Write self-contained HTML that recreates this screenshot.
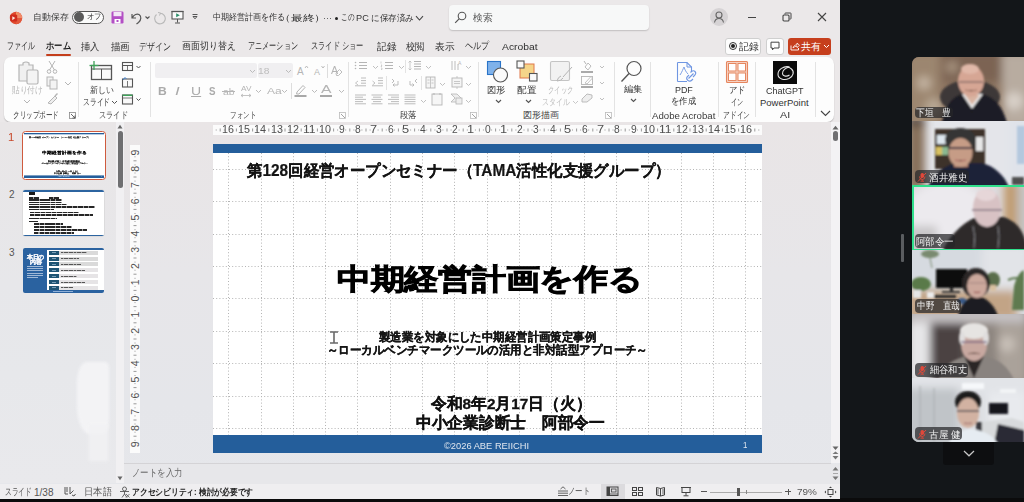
<!DOCTYPE html><html><head><meta charset="utf-8"><style>
*{margin:0;padding:0;box-sizing:border-box}
html,body{width:1024px;height:502px;overflow:hidden;background:#131619;font-family:"Liberation Sans",sans-serif}
.a{position:absolute}
.t{position:absolute;white-space:nowrap;line-height:1}

</style></head><body>
<div class="a" style="left:0;top:0;width:840px;height:498px;background:#ebe8e9"></div>
<div class="a" style="left:0;top:498px;width:1024px;height:4px;background:#0b0b0c"></div>
<svg class="a" style="left:9px;top:10.5px" width="14" height="14" viewBox="0 0 14 14">
<circle cx="7" cy="7" r="6.2" fill="#e04a2e"/><path d="M7 0.8 A6.2 6.2 0 0 1 13.2 7 L7 7Z" fill="#f08a68"/>
<path d="M7 7 L13.2 7 A6.2 6.2 0 0 1 7 13.2Z" fill="#e2583c"/><line x1="7.6" y1="2.6" x2="7.6" y2="5" stroke="#e8d860" stroke-width="0.8"/>
<rect x="1.2" y="3.6" width="7" height="6.8" rx="1" fill="#cf2c1c"/><path d="M3.3 5.2 L6.3 7 L3.3 9.2Z" fill="#fbe6dc"/></svg>
<div class="a" style="left:72px;top:11px;width:32px;height:12.5px;border:1px solid #555;border-radius:6.5px;background:#fbfbfb"></div>
<div class="a" style="left:73.8px;top:12.2px;width:10px;height:10px;border-radius:50%;background:#5a5a5a"></div>
<svg class="a" style="left:111px;top:11px" width="13" height="13" viewBox="0 0 13 13">
<rect x="0.5" y="0.5" width="12" height="12" rx="1.2" fill="#b34fc5"/><rect x="2.5" y="1" width="8" height="4.2" fill="#f3e6f6"/>
<rect x="3.5" y="8" width="6" height="4.5" fill="#fff"/><rect x="5.5" y="9" width="2" height="2" fill="#b34fc5"/></svg>
<svg class="a" style="left:129px;top:10px" width="40" height="15" viewBox="0 0 40 15">
<path d="M3 4 L3 8 L7 8 M3.5 7.5 C5 4.5 8 3.5 10 4.5 C12.5 6 12.5 10 9.5 12.5 L7.5 14" fill="none" stroke="#555" stroke-width="1.2"/>
<path d="M16.5 6.5 L18.5 8.5 L20.5 6.5" fill="none" stroke="#555" stroke-width="1.1"/>
<path d="M31 3.2 A5.3 5.3 0 1 1 27.5 4.5" fill="none" stroke="#b8b8b8" stroke-width="1.1"/><path d="M29 2.5 L31.5 3 L30.5 5.5" fill="none" stroke="#b8b8b8" stroke-width="1"/></svg>
<svg class="a" style="left:171px;top:10px" width="30" height="15" viewBox="0 0 30 15">
<rect x="1" y="1.5" width="11" height="7.5" fill="#fafafa" stroke="#555" stroke-width="1.1"/><line x1="0.5" y1="1.5" x2="12.5" y2="1.5" stroke="#555" stroke-width="1.2"/>
<path d="M5.2 3.2 L8.8 5.2 L5.2 7.2Z" fill="#2c8f6a"/><line x1="6.5" y1="9" x2="6.5" y2="12.5" stroke="#555" stroke-width="1"/><line x1="4" y1="13" x2="9" y2="13" stroke="#555" stroke-width="1"/>
<line x1="21.5" y1="4.5" x2="26.5" y2="4.5" stroke="#555" stroke-width="1"/><path d="M22 6.5 L24 8.8 L26 6.5Z" fill="none" stroke="#555" stroke-width="1"/></svg>
<div class="a" style="left:323.5px;top:18px;width:1.2px;height:1.2px;background:#666"></div><div class="a" style="left:326.5px;top:18px;width:1.2px;height:1.2px;background:#666"></div><div class="a" style="left:329.5px;top:18px;width:1.2px;height:1.2px;background:#666"></div>
<div class="a" style="left:334.5px;top:17px;width:3px;height:3px;border-radius:50%;background:#222"></div>
<svg class="a" style="left:414.5px;top:15px" width="9" height="7" viewBox="0 0 9 7"><path d="M1 1.2 L4.5 5 L8 1.2" fill="none" stroke="#444" stroke-width="1.1"/></svg>
<div class="a" style="left:449px;top:5px;width:200px;height:25px;background:#f7f8f8;border-radius:4px;box-shadow:0 1px 1.5px rgba(0,0,0,.18)"></div>
<svg class="a" style="left:454px;top:11px" width="13" height="13" viewBox="0 0 13 13"><circle cx="8" cy="5" r="3.8" fill="none" stroke="#555" stroke-width="1.1"/><line x1="5.3" y1="7.7" x2="1.2" y2="11.8" stroke="#555" stroke-width="1.2"/></svg>
<div class="a" style="left:710px;top:8px;width:18px;height:18px;border-radius:50%;background:#d6d3d5"></div>
<svg class="a" style="left:711px;top:9px" width="16" height="16" viewBox="0 0 16 16"><circle cx="8" cy="6" r="3" fill="none" stroke="#666" stroke-width="1.1"/><path d="M3.5 13.5 C4 10.5 6 9.5 8 9.5 C10 9.5 12 10.5 12.5 13.5" fill="none" stroke="#666" stroke-width="1.1"/></svg>
<div class="a" style="left:748px;top:16.5px;width:8px;height:1.3px;background:#444"></div>
<svg class="a" style="left:782px;top:12px" width="10" height="10" viewBox="0 0 10 10"><rect x="1" y="3" width="6" height="6" rx="1" fill="none" stroke="#444" stroke-width="1.1"/><path d="M3 2.5 L3 1.5 Q3 1 3.5 1 L8.5 1 Q9 1 9 1.5 L9 6.5 Q9 7 8.5 7 L7.5 7" fill="none" stroke="#444" stroke-width="1"/></svg>
<svg class="a" style="left:817px;top:12px" width="10" height="10" viewBox="0 0 10 10"><path d="M1 1 L9 9 M9 1 L1 9" stroke="#444" stroke-width="1.1"/></svg>
<div class="a" style="left:46px;top:53.5px;width:25px;height:2px;background:#c43e1c;border-radius:1px"></div>
<div class="a" style="left:725px;top:37.5px;width:36px;height:17px;background:#fdfdfd;border:1px solid #cfcfcf;border-radius:3px"></div>
<div class="a" style="left:728.5px;top:42px;width:8px;height:8px;border-radius:50%;border:1px solid #333"></div><div class="a" style="left:730.5px;top:44px;width:4px;height:4px;border-radius:50%;background:#222"></div>
<div class="a" style="left:766px;top:37.5px;width:18px;height:17px;background:#fdfdfd;border:1px solid #cfcfcf;border-radius:3px"></div>
<svg class="a" style="left:770px;top:41px" width="10" height="10" viewBox="0 0 10 10"><path d="M1 1.2 L9 1.2 L9 7 L4 7 L2.5 8.8 L2.5 7 L1 7Z" fill="none" stroke="#444" stroke-width="1"/></svg>
<div class="a" style="left:787.5px;top:37.5px;width:43px;height:17px;background:#c63f1d;border-radius:3px"></div>
<svg class="a" style="left:789.5px;top:41px" width="10" height="10" viewBox="0 0 10 10"><path d="M1 4.5 L1 9 L8.5 9 L8.5 7" fill="none" stroke="#fff" stroke-width="0.9"/><path d="M3 7 C3.3 5 5 3.8 7 3.8 L7 2 L9.5 4.3 L7 6.6 L7 5.2 C5.5 5.2 4.2 5.8 3 7Z" fill="none" stroke="#fff" stroke-width="0.8"/></svg>
<svg class="a" style="left:823px;top:44px" width="7" height="5" viewBox="0 0 7 5"><path d="M1 1 L3.5 3.5 L6 1" fill="none" stroke="#fff" stroke-width="1"/></svg>
<div class="a" style="left:4px;top:57px;width:830px;height:65px;background:#fdfdfd;border-radius:7px;box-shadow:0 1px 1.2px rgba(0,0,0,.22)"></div>
<div class="a" style="left:78px;top:62px;width:1px;height:55px;background:#e3e3e3"></div>
<div class="a" style="left:150px;top:62px;width:1px;height:55px;background:#e3e3e3"></div>
<div class="a" style="left:348px;top:62px;width:1px;height:55px;background:#e3e3e3"></div>
<div class="a" style="left:478px;top:62px;width:1px;height:55px;background:#e3e3e3"></div>
<div class="a" style="left:614px;top:62px;width:1px;height:55px;background:#e3e3e3"></div>
<div class="a" style="left:650px;top:62px;width:1px;height:55px;background:#e3e3e3"></div>
<div class="a" style="left:718px;top:62px;width:1px;height:55px;background:#e3e3e3"></div>
<div class="a" style="left:755px;top:62px;width:1px;height:55px;background:#e3e3e3"></div>
<div class="a" style="left:815px;top:62px;width:1px;height:55px;background:#e3e3e3"></div>
<svg class="a" style="left:16px;top:60px" width="26" height="26" viewBox="0 0 26 26">
<path d="M3 5 L7 5 L7 3 Q10 1 13 3 L13 5 L17 5 L17 21 L3 21Z" fill="#f0f0f0" stroke="#b5b5b5" stroke-width="1.2"/>
<rect x="11" y="10" width="11" height="14" rx="1.5" fill="#f4f4f4" stroke="#b5b5b5" stroke-width="1.2"/></svg>
<svg class="a" style="left:23px;top:99px" width="8" height="5" viewBox="0 0 8 5"><path d="M1 1 L4 4 L7 1" fill="none" stroke="#b5b5b5" stroke-width="1"/></svg>
<svg class="a" style="left:45px;top:60px" width="14" height="46" viewBox="0 0 14 46">
<path d="M4 1 L9.5 10 M10 1 L4.5 10" stroke="#b5b5b5" stroke-width="1"/><circle cx="4" cy="11.5" r="1.8" fill="none" stroke="#b5b5b5"/><circle cx="10" cy="11.5" r="1.8" fill="none" stroke="#b5b5b5"/>
<rect x="2" y="17" width="6" height="9" fill="#f3f3f3" stroke="#b5b5b5"/><rect x="5" y="20" width="7" height="9" fill="#f3f3f3" stroke="#b5b5b5"/>
<path d="M3 43 L10 36 L12 38 L6 44Z" fill="#eee" stroke="#b5b5b5"/><path d="M10 36 L12.5 33.5" stroke="#b5b5b5" stroke-width="1.5"/></svg>
<svg class="a" style="left:64px;top:81px" width="8" height="5" viewBox="0 0 8 5"><path d="M1 1 L4 4 L7 1" fill="none" stroke="#b5b5b5" stroke-width="1"/></svg>
<svg class="a" style="left:69px;top:112px" width="7" height="7" viewBox="0 0 7 7"><rect x="0.5" y="0.5" width="6" height="6" fill="none" stroke="#888" stroke-width="0.8"/><path d="M2 2 L6 6 M6 3.5 L6 6 L3.5 6" stroke="#555" stroke-width="0.9" fill="none"/></svg>
<svg class="a" style="left:88px;top:60px" width="26" height="22" viewBox="0 0 26 22">
<rect x="3.5" y="5.5" width="20" height="14" fill="#fafafa" stroke="#555" stroke-width="1.3"/><line x1="3.5" y1="9" x2="23.5" y2="9" stroke="#555" stroke-width="1"/><line x1="13.5" y1="9" x2="13.5" y2="19" stroke="#555" stroke-width="1"/>
<line x1="6" y1="1" x2="6" y2="10" stroke="#3fa35a" stroke-width="1.3"/><line x1="1.5" y1="5.5" x2="10.5" y2="5.5" stroke="#3fa35a" stroke-width="1.3"/></svg>
<svg class="a" style="left:111px;top:100px" width="7" height="5" viewBox="0 0 7 5"><path d="M1 1 L3.5 3.5 L6 1" fill="none" stroke="#555" stroke-width="1"/></svg>
<svg class="a" style="left:121px;top:61px" width="24" height="45" viewBox="0 0 24 45">
<rect x="1.5" y="1.5" width="10" height="8" fill="#fafafa" stroke="#555" stroke-width="1.1"/><line x1="1.5" y1="4.5" x2="11.5" y2="4.5" stroke="#555"/><line x1="6.5" y1="4.5" x2="6.5" y2="9.5" stroke="#555" stroke-width="0.8"/>
<path d="M15.5 5 L17.5 7 L19.5 5" fill="none" stroke="#555" stroke-width="1"/>
<rect x="1.5" y="18" width="10" height="8" fill="#fafafa" stroke="#555" stroke-width="1.1"/><line x1="6.5" y1="20" x2="6.5" y2="26" stroke="#555" stroke-width="0.8"/><path d="M2 19 L4 16.5 L5.5 18" fill="none" stroke="#3c7fd0" stroke-width="1"/>
<rect x="1.5" y="34" width="10" height="9" fill="#fafafa" stroke="#555" stroke-width="1.1"/><line x1="1.5" y1="34.3" x2="11.5" y2="34.3" stroke="#3fa35a" stroke-width="1.4"/><line x1="1.5" y1="37" x2="11.5" y2="37" stroke="#555" stroke-width="0.8"/>
<path d="M15.5 37.5 L17.5 39.5 L19.5 37.5" fill="none" stroke="#555" stroke-width="1"/></svg>
<div class="a" style="left:155px;top:63px;width:102px;height:15px;background:#f0eff1;border-radius:2px"></div>
<div class="a" style="left:258px;top:63px;width:35px;height:15px;background:#f0eff1;border-radius:2px"></div>
<svg class="a" style="left:249px;top:69px" width="7" height="5" viewBox="0 0 7 5"><path d="M1 1 L3.5 3.5 L6 1" fill="none" stroke="#bbb" stroke-width="1"/></svg>
<svg class="a" style="left:285px;top:69px" width="7" height="5" viewBox="0 0 7 5"><path d="M1 1 L3.5 3.5 L6 1" fill="none" stroke="#bbb" stroke-width="1"/></svg>
<svg class="a" style="left:304px;top:64px" width="22" height="6" viewBox="0 0 22 6"><path d="M1 4 L2.5 2 L4 4" fill="none" stroke="#b5b5b5" stroke-width="0.9"/><path d="M17.5 2 L19 4 L20.5 2" fill="none" stroke="#b5b5b5" stroke-width="0.9"/></svg>
<div class="a" style="left:327px;top:64px;width:1px;height:14px;background:#ddd"></div>
<svg class="a" style="left:335px;top:68px" width="8" height="8" viewBox="0 0 8 8"><path d="M1 5 L4.5 1.5 L7 4 L3.5 7.5 L1.5 7.5Z" fill="none" stroke="#b5b5b5" stroke-width="0.9"/></svg>
<div class="a" style="left:222px;top:91px;width:13px;height:1px;background:#b5b5b5"></div>
<svg class="a" style="left:240px;top:93px" width="12" height="5" viewBox="0 0 12 5"><path d="M1 2.5 L11 2.5 M3 1 L1 2.5 L3 4 M9 1 L11 2.5 L9 4" fill="none" stroke="#b5b5b5" stroke-width="0.8"/></svg>
<svg class="a" style="left:255px;top:89px" width="7" height="5" viewBox="0 0 7 5"><path d="M1 1 L3.5 3.5 L6 1" fill="none" stroke="#bbb" stroke-width="1"/></svg>
<svg class="a" style="left:281px;top:89px" width="7" height="5" viewBox="0 0 7 5"><path d="M1 1 L3.5 3.5 L6 1" fill="none" stroke="#bbb" stroke-width="1"/></svg>
<svg class="a" style="left:311px;top:89px" width="7" height="5" viewBox="0 0 7 5"><path d="M1 1 L3.5 3.5 L6 1" fill="none" stroke="#bbb" stroke-width="1"/></svg>
<svg class="a" style="left:338px;top:89px" width="7" height="5" viewBox="0 0 7 5"><path d="M1 1 L3.5 3.5 L6 1" fill="none" stroke="#bbb" stroke-width="1"/></svg>
<div class="a" style="left:291px;top:83px;width:1px;height:16px;background:#ddd"></div>
<svg class="a" style="left:294px;top:83px" width="13" height="14" viewBox="0 0 13 14"><path d="M3 9 L9 2.5 L11 4.5 L5 11 L2.5 11Z" fill="none" stroke="#b5b5b5" stroke-width="1"/><rect x="0.5" y="12" width="12" height="2" fill="#a8a8a8"/></svg>
<div class="a" style="left:320px;top:95px;width:12px;height:2px;background:#a8a8a8"></div>
<svg class="a" style="left:339px;top:112px" width="7" height="7" viewBox="0 0 7 7"><rect x="0.5" y="0.5" width="6" height="6" fill="none" stroke="#bbb" stroke-width="0.8"/><path d="M2 2 L6 6" stroke="#999" stroke-width="0.9"/></svg>
<svg class="a" style="left:350px;top:60px" width="125" height="48" viewBox="0 0 125 48"><line x1="9" y1="2.5" x2="17" y2="2.5" stroke="#b5b5b5" stroke-width="1"/><line x1="9" y1="5.5" x2="17" y2="5.5" stroke="#b5b5b5" stroke-width="1"/><line x1="9" y1="8.5" x2="17" y2="8.5" stroke="#b5b5b5" stroke-width="1"/><circle cx="5.5" cy="2.5" r="0.8" fill="#b5b5b5"/><circle cx="5.5" cy="5.5" r="0.8" fill="#b5b5b5"/><circle cx="5.5" cy="8.5" r="0.8" fill="#b5b5b5"/><line x1="35" y1="2.5" x2="43" y2="2.5" stroke="#b5b5b5" stroke-width="1"/><line x1="35" y1="5.5" x2="43" y2="5.5" stroke="#b5b5b5" stroke-width="1"/><line x1="35" y1="8.5" x2="43" y2="8.5" stroke="#b5b5b5" stroke-width="1"/><path d="M31 1.5 L31 3.5 M31 5 L32 5 L31 6.5 L32 6.5 M31 8 L32 8 L32 9.5 L31 9.5" stroke="#b5b5b5" stroke-width="0.6" fill="none"/><line x1="64" y1="1.5" x2="71" y2="1.5" stroke="#b5b5b5" stroke-width="1"/><line x1="64" y1="4.0" x2="71" y2="4.0" stroke="#b5b5b5" stroke-width="1"/><line x1="64" y1="6.5" x2="71" y2="6.5" stroke="#b5b5b5" stroke-width="1"/><line x1="64" y1="9.0" x2="71" y2="9.0" stroke="#b5b5b5" stroke-width="1"/><path d="M60 1 L60 10 M58.5 2.5 L60 1 L61.5 2.5 M58.5 8.5 L60 10 L61.5 8.5" stroke="#b5b5b5" stroke-width="0.7" fill="none"/><path d="M102 1 L102 10 M105 1 L105 10 M108 4 L108 10" stroke="#b5b5b5" stroke-width="0.9"/><text x="108" y="5" font-size="5" fill="#b5b5b5">A</text><line x1="11" y1="18.0" x2="16" y2="18.0" stroke="#b5b5b5" stroke-width="0.9"/><line x1="11" y1="20.6" x2="16" y2="20.6" stroke="#b5b5b5" stroke-width="0.9"/><line x1="11" y1="23.2" x2="16" y2="23.2" stroke="#b5b5b5" stroke-width="0.9"/><line x1="5" y1="25.8" x2="16" y2="25.8" stroke="#b5b5b5" stroke-width="0.9"/><path d="M8 21 L5.5 23 L8 25" fill="none" stroke="#b5b5b5" stroke-width="0.8"/><line x1="28" y1="18.0" x2="33" y2="18.0" stroke="#b5b5b5" stroke-width="0.9"/><line x1="28" y1="20.6" x2="33" y2="20.6" stroke="#b5b5b5" stroke-width="0.9"/><line x1="28" y1="23.2" x2="33" y2="23.2" stroke="#b5b5b5" stroke-width="0.9"/><line x1="22" y1="25.8" x2="33" y2="25.8" stroke="#b5b5b5" stroke-width="0.9"/><path d="M22.5 21 L25 23 L22.5 25" fill="none" stroke="#b5b5b5" stroke-width="0.8"/><path d="M42 19 L44 21 L42 23 M48 21 L48 25 L43 25 M44.5 23.5 L43 25 L44.5 26.5" fill="none" stroke="#b5b5b5" stroke-width="0.9"/><path d="M60 21 L60 25 L64 25 M62.5 23.5 L64 25 L62.5 26.5 M67 19 L65 21 L67 23" fill="none" stroke="#b5b5b5" stroke-width="0.9"/><rect x="76" y="17" width="9" height="11" fill="#f5f5f5" stroke="#b5b5b5" stroke-width="0.9"/><path d="M80.5 17 L80.5 28 M77.5 20 L79.5 20 M81.5 20 L83.5 20 M77.5 23 L79.5 23 M81.5 23 L83.5 23" stroke="#b5b5b5" stroke-width="0.7"/><rect x="102" y="18" width="10" height="9" fill="#f5f5f5" stroke="#b5b5b5" stroke-width="0.9"/><path d="M104 21.5 L110 21.5 M104 23.5 L110 23.5 M107 16 L107 18 M107 27 L107 29" stroke="#b5b5b5" stroke-width="0.7"/><line x1="5.0" y1="35.0" x2="16.0" y2="35.0" stroke="#b5b5b5" stroke-width="0.9"/><line x1="5.0" y1="37.2" x2="13.0" y2="37.2" stroke="#b5b5b5" stroke-width="0.9"/><line x1="5.0" y1="39.4" x2="16.0" y2="39.4" stroke="#b5b5b5" stroke-width="0.9"/><line x1="5.0" y1="41.6" x2="13.0" y2="41.6" stroke="#b5b5b5" stroke-width="0.9"/><line x1="5.0" y1="43.8" x2="16.0" y2="43.8" stroke="#b5b5b5" stroke-width="0.9"/><line x1="21.5" y1="35.0" x2="32.5" y2="35.0" stroke="#b5b5b5" stroke-width="0.9"/><line x1="23.0" y1="37.2" x2="31.0" y2="37.2" stroke="#b5b5b5" stroke-width="0.9"/><line x1="21.5" y1="39.4" x2="32.5" y2="39.4" stroke="#b5b5b5" stroke-width="0.9"/><line x1="23.0" y1="41.6" x2="31.0" y2="41.6" stroke="#b5b5b5" stroke-width="0.9"/><line x1="21.5" y1="43.8" x2="32.5" y2="43.8" stroke="#b5b5b5" stroke-width="0.9"/><line x1="38.0" y1="35.0" x2="49.0" y2="35.0" stroke="#b5b5b5" stroke-width="0.9"/><line x1="41.0" y1="37.2" x2="49.0" y2="37.2" stroke="#b5b5b5" stroke-width="0.9"/><line x1="38.0" y1="39.4" x2="49.0" y2="39.4" stroke="#b5b5b5" stroke-width="0.9"/><line x1="41.0" y1="41.6" x2="49.0" y2="41.6" stroke="#b5b5b5" stroke-width="0.9"/><line x1="38.0" y1="43.8" x2="49.0" y2="43.8" stroke="#b5b5b5" stroke-width="0.9"/><line x1="54.5" y1="35.0" x2="65.5" y2="35.0" stroke="#b5b5b5" stroke-width="0.9"/><line x1="54.5" y1="37.2" x2="65.5" y2="37.2" stroke="#b5b5b5" stroke-width="0.9"/><line x1="54.5" y1="39.4" x2="65.5" y2="39.4" stroke="#b5b5b5" stroke-width="0.9"/><line x1="54.5" y1="41.6" x2="65.5" y2="41.6" stroke="#b5b5b5" stroke-width="0.9"/><line x1="54.5" y1="43.8" x2="65.5" y2="43.8" stroke="#b5b5b5" stroke-width="0.9"/><rect x="82" y="34" width="10" height="11" fill="#f6f6f6" stroke="#b5b5b5" stroke-width="0.9"/><path d="M84 33 L84 35 M90 33 L90 35" stroke="#b5b5b5"/><path d="M101 34 L107 34 L111 38 L107 42 L101 42 L105 38Z" fill="#eee" stroke="#b5b5b5" stroke-width="0.8"/><rect x="106" y="38" width="6" height="6" fill="#eee" stroke="#b5b5b5" stroke-width="0.8"/></svg>
<svg class="a" style="left:372px;top:65px" width="7" height="5" viewBox="0 0 7 5"><path d="M1 1 L3.5 3.5 L6 1" fill="none" stroke="#c0c0c0" stroke-width="1"/></svg>
<svg class="a" style="left:398px;top:65px" width="7" height="5" viewBox="0 0 7 5"><path d="M1 1 L3.5 3.5 L6 1" fill="none" stroke="#c0c0c0" stroke-width="1"/></svg>
<svg class="a" style="left:425px;top:65px" width="7" height="5" viewBox="0 0 7 5"><path d="M1 1 L3.5 3.5 L6 1" fill="none" stroke="#c0c0c0" stroke-width="1"/></svg>
<svg class="a" style="left:465px;top:65px" width="7" height="5" viewBox="0 0 7 5"><path d="M1 1 L3.5 3.5 L6 1" fill="none" stroke="#c0c0c0" stroke-width="1"/></svg>
<svg class="a" style="left:439px;top:82px" width="7" height="5" viewBox="0 0 7 5"><path d="M1 1 L3.5 3.5 L6 1" fill="none" stroke="#c0c0c0" stroke-width="1"/></svg>
<svg class="a" style="left:465px;top:82px" width="7" height="5" viewBox="0 0 7 5"><path d="M1 1 L3.5 3.5 L6 1" fill="none" stroke="#c0c0c0" stroke-width="1"/></svg>
<svg class="a" style="left:420px;top:99px" width="7" height="5" viewBox="0 0 7 5"><path d="M1 1 L3.5 3.5 L6 1" fill="none" stroke="#c0c0c0" stroke-width="1"/></svg>
<svg class="a" style="left:465px;top:99px" width="7" height="5" viewBox="0 0 7 5"><path d="M1 1 L3.5 3.5 L6 1" fill="none" stroke="#c0c0c0" stroke-width="1"/></svg>
<div class="a" style="left:405px;top:60px;width:1px;height:13px;background:#e3e3e3"></div>
<div class="a" style="left:386px;top:76px;width:1px;height:14px;background:#e3e3e3"></div>
<div class="a" style="left:421px;top:76px;width:1px;height:14px;background:#e3e3e3"></div>
<svg class="a" style="left:470px;top:112px" width="7" height="7" viewBox="0 0 7 7"><rect x="0.5" y="0.5" width="6" height="6" fill="none" stroke="#bbb" stroke-width="0.8"/><path d="M2 2 L6 6" stroke="#999" stroke-width="0.9"/></svg>
<svg class="a" style="left:486px;top:60px" width="22" height="23" viewBox="0 0 22 23">
<rect x="1.5" y="1.5" width="13" height="13" fill="#7fb2ea" stroke="#2a74c8" stroke-width="1.1"/><circle cx="14.5" cy="15" r="7" fill="#fafafa" stroke="#555" stroke-width="1.1"/></svg>
<svg class="a" style="left:495px;top:99px" width="7" height="5" viewBox="0 0 7 5"><path d="M1 1 L3.5 3.5 L6 1" fill="none" stroke="#555" stroke-width="1.1"/></svg>
<svg class="a" style="left:516px;top:60px" width="23" height="23" viewBox="0 0 23 23">
<rect x="4" y="4" width="14" height="14" fill="#f5d589" stroke="#e0784a" stroke-width="1"/><rect x="1" y="1" width="7" height="7" fill="#fafafa" stroke="#555" stroke-width="1.1"/><rect x="13.5" y="13.5" width="7.5" height="7.5" fill="#fafafa" stroke="#555" stroke-width="1.1"/></svg>
<svg class="a" style="left:525px;top:99px" width="7" height="5" viewBox="0 0 7 5"><path d="M1 1 L3.5 3.5 L6 1" fill="none" stroke="#555" stroke-width="1.1"/></svg>
<svg class="a" style="left:549px;top:60px" width="25" height="23" viewBox="0 0 25 23">
<rect x="1.5" y="1.5" width="19" height="19" rx="1.5" fill="#f2f2f2" stroke="#c4c4c4" stroke-width="1.1"/><path d="M23 7 L14 17 M12 16 Q9 17 8 21 Q12 21 14 18" fill="#f2f2f2" stroke="#b5b5b5" stroke-width="1"/></svg>
<svg class="a" style="left:572px;top:100px" width="7" height="5" viewBox="0 0 7 5"><path d="M1 1 L3.5 3.5 L6 1" fill="none" stroke="#c8c8c8" stroke-width="1"/></svg>
<svg class="a" style="left:580px;top:60px" width="28" height="46" viewBox="0 0 28 46">
<path d="M5 7 L8 3 L11 6 L8 10Z" fill="none" stroke="#b5b5b5" stroke-width="0.9"/><path d="M4 1 L6 4" stroke="#b5b5b5"/><rect x="1" y="11" width="12" height="2" fill="#aaa"/>
<rect x="1.5" y="16.5" width="11" height="8" fill="none" stroke="#b5b5b5" stroke-width="0.9"/><path d="M5 23 L11 16.5 L12.5 18 L7 24Z" fill="#fff" stroke="#b5b5b5" stroke-width="0.8"/><rect x="1" y="26" width="12" height="2" fill="#aaa"/>
<path d="M2 39 L7 34 L12 35 L12 38 L7 42 L2 42Z" fill="#eee" stroke="#b5b5b5" stroke-width="0.9"/>
<path d="M20 6 L22 8 L24 6 M20 22 L22 24 L24 22 M20 38 L22 40 L24 38" fill="none" stroke="#c0c0c0" stroke-width="1"/></svg>
<svg class="a" style="left:605px;top:112px" width="7" height="7" viewBox="0 0 7 7"><rect x="0.5" y="0.5" width="6" height="6" fill="none" stroke="#bbb" stroke-width="0.8"/><path d="M2 2 L6 6" stroke="#999" stroke-width="0.9"/></svg>
<svg class="a" style="left:620px;top:60px" width="24" height="23" viewBox="0 0 24 23"><circle cx="14" cy="8.5" r="7" fill="none" stroke="#555" stroke-width="1.2"/><line x1="9" y1="13.5" x2="1.5" y2="21.5" stroke="#555" stroke-width="1.3"/></svg>
<svg class="a" style="left:630px;top:98px" width="7" height="5" viewBox="0 0 7 5"><path d="M1 1 L3.5 3.5 L6 1" fill="none" stroke="#555" stroke-width="1.1"/></svg>
<svg class="a" style="left:675px;top:61px" width="23" height="23" viewBox="0 0 23 23">
<path d="M2.5 1.5 L12 1.5 L16.5 6 L16.5 11 M12 20.5 L2.5 20.5 Z M2.5 1.5 L2.5 20.5" fill="none" stroke="#6f96e2" stroke-width="1.1"/><path d="M12 1.5 L12 6 L16.5 6" fill="none" stroke="#6f96e2" stroke-width="1"/>
<path d="M5 14 C7 11 8 8 9 6 C10 9 11 11 13 13" fill="none" stroke="#6f96e2" stroke-width="0.9"/>
<path d="M13.5 17.5 L18.5 12.5 M14 14 L12 16 Q11 18 13 19.5 Q15 21 17 19 L18 18 M18 16 L20 14 Q21.5 12 20 10.5 Q18.5 9 16.5 10.5 L15.5 11.5" fill="none" stroke="#6f96e2" stroke-width="1.1"/></svg>
<svg class="a" style="left:725px;top:60px" width="24" height="24" viewBox="0 0 24 24">
<rect x="1.5" y="1.5" width="21" height="21" rx="1" fill="#f6d2c4" stroke="#e6875f" stroke-width="1.1"/>
<rect x="3.5" y="3.5" width="7.5" height="7.5" fill="#fff" stroke="#e6875f" stroke-width="1"/><rect x="13" y="3.5" width="7.5" height="7.5" fill="#fff" stroke="#e6875f" stroke-width="1"/>
<rect x="3.5" y="13" width="7.5" height="7.5" fill="#fff" stroke="#e6875f" stroke-width="1"/><rect x="13" y="13" width="7.5" height="7.5" fill="#fff" stroke="#e6875f" stroke-width="1"/></svg>
<svg class="a" style="left:773px;top:60.5px" width="24" height="23" viewBox="0 0 24 23">
<rect x="0" y="0" width="24" height="23" fill="#0a0a0a"/>
<path d="M16 5.8 C10.5 4.8 5 8.5 5 13.2 C5 17.8 11 19.8 16 17.5 C20.5 15.3 21.5 10.5 18.5 8 C17.5 7 16.5 6.5 15 6.2" fill="none" stroke="#e6e6e6" stroke-width="1.1"/><path d="M17 6 C12.5 6.5 9 9.5 9.5 12.8 C10 15.5 14 15.8 16.5 14" fill="none" stroke="#e6e6e6" stroke-width="1.1"/></svg>
<svg class="a" style="left:820px;top:110px" width="11" height="7" viewBox="0 0 11 7"><path d="M1 1 L5.5 5.5 L10 1" fill="none" stroke="#444" stroke-width="1.1"/></svg>
<div class="a" style="left:0;top:122px;width:840px;height:376px;background:linear-gradient(180deg,#e9e5e6 0%,#e7e6e9 40%,#e5e6ea 75%,#e6e7eb 100%)"></div>
<div class="a" style="left:0;top:122px;width:116px;height:361px;background:linear-gradient(180deg,#e9e6e7 0%,#e7e7ea 45%,#e7e8eb 70%,#e9e9ec 100%)"></div>
<div class="a" style="left:77px;top:362px;width:32px;height:72px;background:#f5f5f7;opacity:.9;filter:blur(1.6px);border-radius:30% 10% 20% 40%"></div><div class="a" style="left:89px;top:425px;width:19px;height:36px;background:#f2f2f4;opacity:.85;filter:blur(1.6px)"></div>
<div class="a" style="left:116px;top:122px;width:8px;height:361px;background:#f1f0f2"></div>
<svg class="a" style="left:117px;top:124px" width="6" height="5" viewBox="0 0 6 5"><path d="M0.5 4.5 L3 0.8 L5.5 4.5Z" fill="#666"/></svg>
<div class="a" style="left:118px;top:131px;width:5px;height:57px;border-radius:2.5px;background:#6f6f71"></div>
<svg class="a" style="left:117px;top:476px" width="6" height="5" viewBox="0 0 6 5"><path d="M0.5 0.5 L3 4.2 L5.5 0.5Z" fill="#666"/></svg>
<div class="a" style="left:22px;top:131px;width:84px;height:49px;border:1.6px solid #cf5b3e;border-radius:3.5px;background:#fff;overflow:hidden"></div>
<div class="a" style="left:23px;top:190px;width:81px;height:46px;background:#fff;border-radius:2px;overflow:hidden;box-shadow:0 0 0 0.5px #d0d0d0"><div class="a" style="left:0;top:0;width:81px;height:1.6px;background:#2c64a0"></div><div class="a" style="left:0;top:44.5px;width:81px;height:2px;background:#2c64a0"></div><div class="a" style="left:5.6px;top:2.4px;width:6.5px;height:2.6px;background:#1a1a1a"></div><div class="a" style="left:5.6px;top:7.2px;width:10.200000000000001px;height:1.6px;background:repeating-linear-gradient(90deg,#262626 0 4.5px,#9a9a9a 4.5px 5.5px)"></div><div class="a" style="left:25.5px;top:7.2px;width:10.200000000000003px;height:1.6px;background:repeating-linear-gradient(90deg,#262626 0 4.5px,#9a9a9a 4.5px 5.5px)"></div><div class="a" style="left:5.6px;top:9.2px;width:33.4px;height:1.6px;background:repeating-linear-gradient(90deg,#262626 0 4.5px,#9a9a9a 4.5px 5.5px)"></div><div class="a" style="left:5.6px;top:11.5px;width:33.9px;height:1.6px;background:repeating-linear-gradient(90deg,#262626 0 4.5px,#9a9a9a 4.5px 5.5px)"></div><div class="a" style="left:5.6px;top:13.7px;width:38.699999999999996px;height:1.6px;background:repeating-linear-gradient(90deg,#262626 0 4.5px,#9a9a9a 4.5px 5.5px)"></div><div class="a" style="left:5.6px;top:16.0px;width:66.7px;height:1.6px;background:repeating-linear-gradient(90deg,#262626 0 4.5px,#9a9a9a 4.5px 5.5px)"></div><div class="a" style="left:5.6px;top:18.9px;width:25.799999999999997px;height:1.6px;background:repeating-linear-gradient(90deg,#262626 0 4.5px,#9a9a9a 4.5px 5.5px)"></div><div class="a" style="left:7.2px;top:21.9px;width:48.8px;height:1.6px;background:repeating-linear-gradient(90deg,#262626 0 4.5px,#9a9a9a 4.5px 5.5px)"></div><div class="a" style="left:7.2px;top:24.4px;width:62.8px;height:1.6px;background:repeating-linear-gradient(90deg,#262626 0 4.5px,#9a9a9a 4.5px 5.5px)"></div><div class="a" style="left:5.6px;top:27.5px;width:28.4px;height:1.6px;background:repeating-linear-gradient(90deg,#262626 0 4.5px,#9a9a9a 4.5px 5.5px)"></div><div class="a" style="left:6px;top:30.7px;width:8.7px;height:1.6px;background:repeating-linear-gradient(90deg,#262626 0 4.5px,#9a9a9a 4.5px 5.5px)"></div><div class="a" style="left:11px;top:33.400000000000006px;width:29px;height:1.6px;background:repeating-linear-gradient(90deg,#262626 0 4.5px,#9a9a9a 4.5px 5.5px)"></div><div class="a" style="left:11px;top:36.2px;width:37.6px;height:1.6px;background:repeating-linear-gradient(90deg,#262626 0 4.5px,#9a9a9a 4.5px 5.5px)"></div><div class="a" style="left:11px;top:39.2px;width:53.2px;height:1.6px;background:repeating-linear-gradient(90deg,#262626 0 4.5px,#9a9a9a 4.5px 5.5px)"></div><div class="a" style="left:11px;top:42.0px;width:39.8px;height:1.6px;background:repeating-linear-gradient(90deg,#262626 0 4.5px,#9a9a9a 4.5px 5.5px)"></div></div>
<div class="a" style="left:23px;top:248px;width:81px;height:45px;background:#2a62a0;border-radius:2px;overflow:hidden"><div class="a" style="left:24.4px;top:1.6px;width:56.6px;height:40.8px;background:#fff"></div><div class="a" style="left:4.3px;top:5.6px;width:34px;font:bold 11px/10.5px 'Liberation Sans',sans-serif;color:#f4f6fa;-webkit-text-stroke:0.7px #f4f6fa;text-align:center;transform:scale(0.5);transform-origin:0 0;white-space:nowrap">本日の<br>内容</div><div class="a" style="left:3.5px;top:18.0px;width:16px;height:0.9px;background:#9fb8d6"></div><div class="a" style="left:3.5px;top:20.2px;width:16px;height:0.9px;background:#9fb8d6"></div><div class="a" style="left:3.5px;top:22.4px;width:16px;height:0.9px;background:#9fb8d6"></div><div class="a" style="left:3.5px;top:24.6px;width:16px;height:0.9px;background:#9fb8d6"></div><div class="a" style="left:3.5px;top:26.8px;width:16px;height:0.9px;background:#9fb8d6"></div><div class="a" style="left:3.5px;top:29.0px;width:11px;height:0.9px;background:#9fb8d6"></div><div class="a" style="left:26.2px;top:2.7px;width:9.5px;height:4px;background:#1e5473"></div><div class="a" style="left:35.7px;top:2.7px;width:39.3px;height:4px;background:#dadada"></div><div class="a" style="left:37.5px;top:4.1px;width:26px;height:1.1px;background:repeating-linear-gradient(90deg,#555 0 2px,#aaa 2px 2.6px)"></div><div class="a" style="left:29px;top:4.2px;width:3.5px;height:1px;background:#7aa0b8"></div><div class="a" style="left:26.2px;top:8.58px;width:9.5px;height:4px;background:#1e5473"></div><div class="a" style="left:35.7px;top:8.58px;width:39.3px;height:4px;background:#dadada"></div><div class="a" style="left:37.5px;top:9.98px;width:18px;height:1.1px;background:repeating-linear-gradient(90deg,#555 0 2px,#aaa 2px 2.6px)"></div><div class="a" style="left:29px;top:10.08px;width:3.5px;height:1px;background:#7aa0b8"></div><div class="a" style="left:26.2px;top:14.46px;width:9.5px;height:4px;background:#1e5473"></div><div class="a" style="left:35.7px;top:14.46px;width:39.3px;height:4px;background:#dadada"></div><div class="a" style="left:37.5px;top:15.860000000000001px;width:20px;height:1.1px;background:repeating-linear-gradient(90deg,#555 0 2px,#aaa 2px 2.6px)"></div><div class="a" style="left:29px;top:15.96px;width:3.5px;height:1px;background:#7aa0b8"></div><div class="a" style="left:26.2px;top:20.34px;width:9.5px;height:4px;background:#1e5473"></div><div class="a" style="left:35.7px;top:20.34px;width:39.3px;height:4px;background:#e6e4e6"></div><div class="a" style="left:37.5px;top:21.74px;width:24px;height:1.1px;background:repeating-linear-gradient(90deg,#555 0 2px,#aaa 2px 2.6px)"></div><div class="a" style="left:29px;top:21.84px;width:3.5px;height:1px;background:#7aa0b8"></div><div class="a" style="left:26.2px;top:26.22px;width:9.5px;height:4px;background:#1e5473"></div><div class="a" style="left:35.7px;top:26.22px;width:39.3px;height:4px;background:#e6e4e6"></div><div class="a" style="left:37.5px;top:27.619999999999997px;width:16px;height:1.1px;background:repeating-linear-gradient(90deg,#555 0 2px,#aaa 2px 2.6px)"></div><div class="a" style="left:29px;top:27.72px;width:3.5px;height:1px;background:#7aa0b8"></div><div class="a" style="left:26.2px;top:32.1px;width:9.5px;height:4px;background:#1e5473"></div><div class="a" style="left:35.7px;top:32.1px;width:39.3px;height:4px;background:#e6e4e6"></div><div class="a" style="left:37.5px;top:33.5px;width:24px;height:1.1px;background:repeating-linear-gradient(90deg,#555 0 2px,#aaa 2px 2.6px)"></div><div class="a" style="left:29px;top:33.6px;width:3.5px;height:1px;background:#7aa0b8"></div><div class="a" style="left:26.2px;top:37.980000000000004px;width:9.5px;height:4px;background:#1e5473"></div><div class="a" style="left:35.7px;top:37.980000000000004px;width:39.3px;height:4px;background:#e6e4e6"></div><div class="a" style="left:37.5px;top:39.38px;width:12px;height:1.1px;background:repeating-linear-gradient(90deg,#555 0 2px,#aaa 2px 2.6px)"></div><div class="a" style="left:29px;top:39.480000000000004px;width:3.5px;height:1px;background:#7aa0b8"></div><div class="a" style="left:30px;top:43.2px;width:20px;height:0.8px;background:#8fb0d8"></div></div>
<div class="a" style="left:213px;top:124.5px;width:549px;height:10.5px;background:#fbfbfb"></div>
<div class="a" style="left:130px;top:145px;width:10px;height:308px;background:#fbfbfb"></div>
<svg class="a" style="left:213px;top:124.5px" width="549" height="11"><rect x="2.7" y="4.5" width="1" height="1" fill="#999"/><rect x="6.7" y="3.5" width="1" height="3" fill="#999"/><rect x="10.8" y="4.5" width="1" height="1" fill="#999"/><rect x="18.9" y="4.5" width="1" height="1" fill="#999"/><rect x="22.9" y="3.5" width="1" height="3" fill="#999"/><rect x="27.0" y="4.5" width="1" height="1" fill="#999"/><rect x="35.1" y="4.5" width="1" height="1" fill="#999"/><rect x="39.1" y="3.5" width="1" height="3" fill="#999"/><rect x="43.1" y="4.5" width="1" height="1" fill="#999"/><rect x="51.2" y="4.5" width="1" height="1" fill="#999"/><rect x="55.3" y="3.5" width="1" height="3" fill="#999"/><rect x="59.4" y="4.5" width="1" height="1" fill="#999"/><rect x="67.5" y="4.5" width="1" height="1" fill="#999"/><rect x="71.5" y="3.5" width="1" height="3" fill="#999"/><rect x="75.6" y="4.5" width="1" height="1" fill="#999"/><rect x="83.6" y="4.5" width="1" height="1" fill="#999"/><rect x="87.7" y="3.5" width="1" height="3" fill="#999"/><rect x="91.8" y="4.5" width="1" height="1" fill="#999"/><rect x="99.9" y="4.5" width="1" height="1" fill="#999"/><rect x="103.9" y="3.5" width="1" height="3" fill="#999"/><rect x="108.0" y="4.5" width="1" height="1" fill="#999"/><rect x="116.1" y="4.5" width="1" height="1" fill="#999"/><rect x="120.1" y="3.5" width="1" height="3" fill="#999"/><rect x="124.1" y="4.5" width="1" height="1" fill="#999"/><rect x="132.2" y="4.5" width="1" height="1" fill="#999"/><rect x="136.3" y="3.5" width="1" height="3" fill="#999"/><rect x="140.4" y="4.5" width="1" height="1" fill="#999"/><rect x="148.4" y="4.5" width="1" height="1" fill="#999"/><rect x="152.5" y="3.5" width="1" height="3" fill="#999"/><rect x="156.6" y="4.5" width="1" height="1" fill="#999"/><rect x="164.6" y="4.5" width="1" height="1" fill="#999"/><rect x="168.7" y="3.5" width="1" height="3" fill="#999"/><rect x="172.8" y="4.5" width="1" height="1" fill="#999"/><rect x="180.9" y="4.5" width="1" height="1" fill="#999"/><rect x="184.9" y="3.5" width="1" height="3" fill="#999"/><rect x="188.9" y="4.5" width="1" height="1" fill="#999"/><rect x="197.1" y="4.5" width="1" height="1" fill="#999"/><rect x="201.1" y="3.5" width="1" height="3" fill="#999"/><rect x="205.1" y="4.5" width="1" height="1" fill="#999"/><rect x="213.2" y="4.5" width="1" height="1" fill="#999"/><rect x="217.3" y="3.5" width="1" height="3" fill="#999"/><rect x="221.4" y="4.5" width="1" height="1" fill="#999"/><rect x="229.4" y="4.5" width="1" height="1" fill="#999"/><rect x="233.5" y="3.5" width="1" height="3" fill="#999"/><rect x="237.6" y="4.5" width="1" height="1" fill="#999"/><rect x="245.6" y="4.5" width="1" height="1" fill="#999"/><rect x="249.7" y="3.5" width="1" height="3" fill="#999"/><rect x="253.8" y="4.5" width="1" height="1" fill="#999"/><rect x="261.9" y="4.5" width="1" height="1" fill="#999"/><rect x="265.9" y="3.5" width="1" height="3" fill="#999"/><rect x="269.9" y="4.5" width="1" height="1" fill="#999"/><rect x="278.1" y="4.5" width="1" height="1" fill="#999"/><rect x="282.1" y="3.5" width="1" height="3" fill="#999"/><rect x="286.1" y="4.5" width="1" height="1" fill="#999"/><rect x="294.2" y="4.5" width="1" height="1" fill="#999"/><rect x="298.3" y="3.5" width="1" height="3" fill="#999"/><rect x="302.4" y="4.5" width="1" height="1" fill="#999"/><rect x="310.5" y="4.5" width="1" height="1" fill="#999"/><rect x="314.5" y="3.5" width="1" height="3" fill="#999"/><rect x="318.5" y="4.5" width="1" height="1" fill="#999"/><rect x="326.6" y="4.5" width="1" height="1" fill="#999"/><rect x="330.7" y="3.5" width="1" height="3" fill="#999"/><rect x="334.8" y="4.5" width="1" height="1" fill="#999"/><rect x="342.9" y="4.5" width="1" height="1" fill="#999"/><rect x="346.9" y="3.5" width="1" height="3" fill="#999"/><rect x="351.0" y="4.5" width="1" height="1" fill="#999"/><rect x="359.0" y="4.5" width="1" height="1" fill="#999"/><rect x="363.1" y="3.5" width="1" height="3" fill="#999"/><rect x="367.1" y="4.5" width="1" height="1" fill="#999"/><rect x="375.2" y="4.5" width="1" height="1" fill="#999"/><rect x="379.3" y="3.5" width="1" height="3" fill="#999"/><rect x="383.4" y="4.5" width="1" height="1" fill="#999"/><rect x="391.5" y="4.5" width="1" height="1" fill="#999"/><rect x="395.5" y="3.5" width="1" height="3" fill="#999"/><rect x="399.5" y="4.5" width="1" height="1" fill="#999"/><rect x="407.6" y="4.5" width="1" height="1" fill="#999"/><rect x="411.7" y="3.5" width="1" height="3" fill="#999"/><rect x="415.8" y="4.5" width="1" height="1" fill="#999"/><rect x="423.9" y="4.5" width="1" height="1" fill="#999"/><rect x="427.9" y="3.5" width="1" height="3" fill="#999"/><rect x="432.0" y="4.5" width="1" height="1" fill="#999"/><rect x="440.0" y="4.5" width="1" height="1" fill="#999"/><rect x="444.1" y="3.5" width="1" height="3" fill="#999"/><rect x="448.1" y="4.5" width="1" height="1" fill="#999"/><rect x="456.2" y="4.5" width="1" height="1" fill="#999"/><rect x="460.3" y="3.5" width="1" height="3" fill="#999"/><rect x="464.4" y="4.5" width="1" height="1" fill="#999"/><rect x="472.5" y="4.5" width="1" height="1" fill="#999"/><rect x="476.5" y="3.5" width="1" height="3" fill="#999"/><rect x="480.5" y="4.5" width="1" height="1" fill="#999"/><rect x="488.6" y="4.5" width="1" height="1" fill="#999"/><rect x="492.7" y="3.5" width="1" height="3" fill="#999"/><rect x="496.8" y="4.5" width="1" height="1" fill="#999"/><rect x="504.9" y="4.5" width="1" height="1" fill="#999"/><rect x="508.9" y="3.5" width="1" height="3" fill="#999"/><rect x="513.0" y="4.5" width="1" height="1" fill="#999"/><rect x="521.0" y="4.5" width="1" height="1" fill="#999"/><rect x="525.1" y="3.5" width="1" height="3" fill="#999"/><rect x="529.1" y="4.5" width="1" height="1" fill="#999"/><rect x="537.2" y="4.5" width="1" height="1" fill="#999"/><rect x="541.3" y="3.5" width="1" height="3" fill="#999"/><rect x="545.3" y="4.5" width="1" height="1" fill="#999"/></svg>
<svg class="a" style="left:130px;top:145px" width="10" height="308"><text x="0" y="0" transform="translate(8.8 7.7) rotate(-90)" text-anchor="middle" font-family="Liberation Sans" font-size="10.5" fill="#505050">9</text><rect x="4.5" y="11.3" width="1" height="1" fill="#999"/><rect x="3.5" y="15.3" width="3" height="1" fill="#999"/><rect x="4.5" y="19.4" width="1" height="1" fill="#999"/><text x="0" y="0" transform="translate(8.8 23.9) rotate(-90)" text-anchor="middle" font-family="Liberation Sans" font-size="10.5" fill="#505050">8</text><rect x="4.5" y="27.5" width="1" height="1" fill="#999"/><rect x="3.5" y="31.5" width="3" height="1" fill="#999"/><rect x="4.5" y="35.6" width="1" height="1" fill="#999"/><text x="0" y="0" transform="translate(8.8 40.1) rotate(-90)" text-anchor="middle" font-family="Liberation Sans" font-size="10.5" fill="#505050">7</text><rect x="4.5" y="43.7" width="1" height="1" fill="#999"/><rect x="3.5" y="47.7" width="3" height="1" fill="#999"/><rect x="4.5" y="51.8" width="1" height="1" fill="#999"/><text x="0" y="0" transform="translate(8.8 56.3) rotate(-90)" text-anchor="middle" font-family="Liberation Sans" font-size="10.5" fill="#505050">6</text><rect x="4.5" y="59.9" width="1" height="1" fill="#999"/><rect x="3.5" y="63.9" width="3" height="1" fill="#999"/><rect x="4.5" y="68.0" width="1" height="1" fill="#999"/><text x="0" y="0" transform="translate(8.8 72.5) rotate(-90)" text-anchor="middle" font-family="Liberation Sans" font-size="10.5" fill="#505050">5</text><rect x="4.5" y="76.0" width="1" height="1" fill="#999"/><rect x="3.5" y="80.1" width="3" height="1" fill="#999"/><rect x="4.5" y="84.2" width="1" height="1" fill="#999"/><text x="0" y="0" transform="translate(8.8 88.7) rotate(-90)" text-anchor="middle" font-family="Liberation Sans" font-size="10.5" fill="#505050">4</text><rect x="4.5" y="92.2" width="1" height="1" fill="#999"/><rect x="3.5" y="96.3" width="3" height="1" fill="#999"/><rect x="4.5" y="100.3" width="1" height="1" fill="#999"/><text x="0" y="0" transform="translate(8.8 104.9) rotate(-90)" text-anchor="middle" font-family="Liberation Sans" font-size="10.5" fill="#505050">3</text><rect x="4.5" y="108.5" width="1" height="1" fill="#999"/><rect x="3.5" y="112.5" width="3" height="1" fill="#999"/><rect x="4.5" y="116.6" width="1" height="1" fill="#999"/><text x="0" y="0" transform="translate(8.8 121.1) rotate(-90)" text-anchor="middle" font-family="Liberation Sans" font-size="10.5" fill="#505050">2</text><rect x="4.5" y="124.7" width="1" height="1" fill="#999"/><rect x="3.5" y="128.7" width="3" height="1" fill="#999"/><rect x="4.5" y="132.8" width="1" height="1" fill="#999"/><text x="0" y="0" transform="translate(8.8 137.3) rotate(-90)" text-anchor="middle" font-family="Liberation Sans" font-size="10.5" fill="#505050">1</text><rect x="4.5" y="140.9" width="1" height="1" fill="#999"/><rect x="3.5" y="144.9" width="3" height="1" fill="#999"/><rect x="4.5" y="149.0" width="1" height="1" fill="#999"/><text x="0" y="0" transform="translate(8.8 153.5) rotate(-90)" text-anchor="middle" font-family="Liberation Sans" font-size="10.5" fill="#505050">0</text><rect x="4.5" y="157.1" width="1" height="1" fill="#999"/><rect x="3.5" y="161.1" width="3" height="1" fill="#999"/><rect x="4.5" y="165.2" width="1" height="1" fill="#999"/><text x="0" y="0" transform="translate(8.8 169.7) rotate(-90)" text-anchor="middle" font-family="Liberation Sans" font-size="10.5" fill="#505050">1</text><rect x="4.5" y="173.2" width="1" height="1" fill="#999"/><rect x="3.5" y="177.3" width="3" height="1" fill="#999"/><rect x="4.5" y="181.3" width="1" height="1" fill="#999"/><text x="0" y="0" transform="translate(8.8 185.9) rotate(-90)" text-anchor="middle" font-family="Liberation Sans" font-size="10.5" fill="#505050">2</text><rect x="4.5" y="189.4" width="1" height="1" fill="#999"/><rect x="3.5" y="193.5" width="3" height="1" fill="#999"/><rect x="4.5" y="197.5" width="1" height="1" fill="#999"/><text x="0" y="0" transform="translate(8.8 202.1) rotate(-90)" text-anchor="middle" font-family="Liberation Sans" font-size="10.5" fill="#505050">3</text><rect x="4.5" y="205.7" width="1" height="1" fill="#999"/><rect x="3.5" y="209.7" width="3" height="1" fill="#999"/><rect x="4.5" y="213.8" width="1" height="1" fill="#999"/><text x="0" y="0" transform="translate(8.8 218.3) rotate(-90)" text-anchor="middle" font-family="Liberation Sans" font-size="10.5" fill="#505050">4</text><rect x="4.5" y="221.9" width="1" height="1" fill="#999"/><rect x="3.5" y="225.9" width="3" height="1" fill="#999"/><rect x="4.5" y="230.0" width="1" height="1" fill="#999"/><text x="0" y="0" transform="translate(8.8 234.5) rotate(-90)" text-anchor="middle" font-family="Liberation Sans" font-size="10.5" fill="#505050">5</text><rect x="4.5" y="238.1" width="1" height="1" fill="#999"/><rect x="3.5" y="242.1" width="3" height="1" fill="#999"/><rect x="4.5" y="246.2" width="1" height="1" fill="#999"/><text x="0" y="0" transform="translate(8.8 250.7) rotate(-90)" text-anchor="middle" font-family="Liberation Sans" font-size="10.5" fill="#505050">6</text><rect x="4.5" y="254.2" width="1" height="1" fill="#999"/><rect x="3.5" y="258.3" width="3" height="1" fill="#999"/><rect x="4.5" y="262.3" width="1" height="1" fill="#999"/><text x="0" y="0" transform="translate(8.8 266.9) rotate(-90)" text-anchor="middle" font-family="Liberation Sans" font-size="10.5" fill="#505050">7</text><rect x="4.5" y="270.4" width="1" height="1" fill="#999"/><rect x="3.5" y="274.5" width="3" height="1" fill="#999"/><rect x="4.5" y="278.5" width="1" height="1" fill="#999"/><text x="0" y="0" transform="translate(8.8 283.1) rotate(-90)" text-anchor="middle" font-family="Liberation Sans" font-size="10.5" fill="#505050">8</text><rect x="4.5" y="286.7" width="1" height="1" fill="#999"/><rect x="3.5" y="290.7" width="3" height="1" fill="#999"/><rect x="4.5" y="294.8" width="1" height="1" fill="#999"/><text x="0" y="0" transform="translate(8.8 299.3) rotate(-90)" text-anchor="middle" font-family="Liberation Sans" font-size="10.5" fill="#505050">9</text></svg>
<div class="a" style="left:831px;top:122px;width:9px;height:341px;background:#f3f2f4"></div>
<svg class="a" style="left:832px;top:125px" width="7" height="5" viewBox="0 0 7 5"><path d="M0.5 4.5 L3.5 0.8 L6.5 4.5Z" fill="#666"/></svg>
<div class="a" style="left:833px;top:131px;width:5px;height:10px;border-radius:2.5px;background:#6f6f71"></div>
<svg class="a" style="left:832px;top:446px" width="7" height="15" viewBox="0 0 7 15"><path d="M0.5 0.5 L3.5 4 L6.5 0.5Z" fill="#666"/><path d="M0.5 8 L3.5 5.5 L6.5 8Z" fill="#777"/><path d="M0.5 10 L3.5 13.5 L6.5 10Z" fill="#777"/></svg>
<div class="a" style="left:124px;top:463px;width:707px;height:1px;background:#d4d3d6"></div>
<div class="a" style="left:124px;top:464px;width:716px;height:20px;background:#e7e7ea"></div>
<svg class="a" style="left:832px;top:466px" width="7" height="15" viewBox="0 0 7 15"><path d="M0.5 4.5 L3.5 1 L6.5 4.5Z" fill="#777"/><rect x="1" y="7" width="5" height="0.8" fill="#999"/><path d="M0.5 10.5 L3.5 14 L6.5 10.5Z" fill="#777"/></svg>
<div class="a" style="left:0;top:484px;width:840px;height:14.5px;background:#efeef0"></div>
<svg class="a" style="left:64px;top:486px" width="12" height="11" viewBox="0 0 12 11"><path d="M1 1 L1 8 L4 8 M3 1 L3 6 M6 1 L6 8 L9.5 4.5 M8 9 L10 10 L11.5 8" fill="none" stroke="#555" stroke-width="1"/></svg>
<svg class="a" style="left:119px;top:485.5px" width="11" height="12" viewBox="0 0 11 12"><circle cx="5.5" cy="3" r="2" fill="none" stroke="#555" stroke-width="0.9"/><path d="M1 5.5 L10 5.5 M5.5 5 L5.5 8 L3 11.5 M5.5 8 L8 11.5" fill="none" stroke="#555" stroke-width="0.9"/><path d="M7 8 L10.5 11.5 M10.5 8 L7 11.5" stroke="#555" stroke-width="0.8"/></svg>
<svg class="a" style="left:557px;top:486px" width="12" height="11" viewBox="0 0 12 11"><path d="M3.5 3 L6 0.8 L8.5 3" fill="none" stroke="#555" stroke-width="0.9"/><path d="M1 5 L11 5 M1 7.2 L11 7.2 M1 9.5 L11 9.5" stroke="#555" stroke-width="0.9"/></svg>
<div class="a" style="left:600.5px;top:484px;width:24px;height:14.5px;background:#dcdbde"></div>
<svg class="a" style="left:606px;top:486px" width="90" height="11" viewBox="0 0 90 11">
<rect x="1" y="1" width="11" height="8.5" fill="none" stroke="#444" stroke-width="1"/><rect x="1" y="1" width="3" height="8.5" fill="#444"/><rect x="5.5" y="3" width="4.5" height="3" fill="none" stroke="#444" stroke-width="0.8"/><line x1="4" y1="8" x2="12" y2="8" stroke="#444" stroke-width="0.8"/>
<rect x="26.5" y="1.5" width="4" height="3" fill="none" stroke="#444" stroke-width="1"/><rect x="32.5" y="1.5" width="4" height="3" fill="none" stroke="#444" stroke-width="1"/><rect x="26.5" y="6.5" width="4" height="3" fill="none" stroke="#444" stroke-width="1"/><rect x="32.5" y="6.5" width="4" height="3" fill="none" stroke="#444" stroke-width="1"/>
<path d="M50.5 1.5 L54.5 2.5 L54.5 10 L50.5 9Z M54.5 2.5 L58.5 1.5 L58.5 9 L54.5 10Z" fill="none" stroke="#444" stroke-width="1"/><path d="M52 3 L52 8.5 M57 3 L57 8.5" stroke="#444" stroke-width="0.8"/>
<rect x="76" y="1.5" width="8" height="5" fill="none" stroke="#444" stroke-width="1"/><line x1="75" y1="1.5" x2="85" y2="1.5" stroke="#444"/><line x1="80" y1="6.5" x2="80" y2="9.5" stroke="#444"/><line x1="77.5" y1="9.8" x2="82.5" y2="9.8" stroke="#444"/></svg>
<div class="a" style="left:701px;top:491.2px;width:6px;height:1px;background:#555"></div>
<div class="a" style="left:710px;top:491.5px;width:72px;height:1px;background:#aaa"></div>
<div class="a" style="left:745.5px;top:489.5px;width:1px;height:4px;background:#888"></div>
<div class="a" style="left:737px;top:488px;width:3px;height:8px;background:#555"></div>
<div class="a" style="left:785px;top:491.2px;width:6px;height:1px;background:#555"></div><div class="a" style="left:787.5px;top:488.7px;width:1px;height:6px;background:#555"></div>
<svg class="a" style="left:824px;top:486px" width="13" height="12" viewBox="0 0 13 12"><rect x="4" y="3.5" width="5" height="5" fill="none" stroke="#444" stroke-width="1"/><path d="M6.5 0.5 L5 2 L8 2Z M6.5 11.5 L5 10 L8 10Z M0.5 6 L2 4.5 L2 7.5Z M12.5 6 L11 4.5 L11 7.5Z" fill="#444"/></svg>
<div class="a" style="left:213px;top:144px;width:549px;height:309px;background:#fff"></div>
<svg class="a" style="left:213px;top:144px" width="549" height="309"><line x1="15.5" y1="9" x2="15.5" y2="291" stroke="#b4b4b4" stroke-width="1" stroke-dasharray="1 2.2"/><line x1="48.5" y1="9" x2="48.5" y2="291" stroke="#b4b4b4" stroke-width="1" stroke-dasharray="1 2.2"/><line x1="80.5" y1="9" x2="80.5" y2="291" stroke="#b4b4b4" stroke-width="1" stroke-dasharray="1 2.2"/><line x1="112.5" y1="9" x2="112.5" y2="291" stroke="#b4b4b4" stroke-width="1" stroke-dasharray="1 2.2"/><line x1="144.5" y1="9" x2="144.5" y2="291" stroke="#b4b4b4" stroke-width="1" stroke-dasharray="1 2.2"/><line x1="177.5" y1="9" x2="177.5" y2="291" stroke="#b4b4b4" stroke-width="1" stroke-dasharray="1 2.2"/><line x1="209.5" y1="9" x2="209.5" y2="291" stroke="#b4b4b4" stroke-width="1" stroke-dasharray="1 2.2"/><line x1="241.5" y1="9" x2="241.5" y2="291" stroke="#b4b4b4" stroke-width="1" stroke-dasharray="1 2.2"/><line x1="274.5" y1="9" x2="274.5" y2="291" stroke="#b4b4b4" stroke-width="1" stroke-dasharray="1 2.2"/><line x1="306.5" y1="9" x2="306.5" y2="291" stroke="#b4b4b4" stroke-width="1" stroke-dasharray="1 2.2"/><line x1="338.5" y1="9" x2="338.5" y2="291" stroke="#b4b4b4" stroke-width="1" stroke-dasharray="1 2.2"/><line x1="371.5" y1="9" x2="371.5" y2="291" stroke="#b4b4b4" stroke-width="1" stroke-dasharray="1 2.2"/><line x1="403.5" y1="9" x2="403.5" y2="291" stroke="#b4b4b4" stroke-width="1" stroke-dasharray="1 2.2"/><line x1="435.5" y1="9" x2="435.5" y2="291" stroke="#b4b4b4" stroke-width="1" stroke-dasharray="1 2.2"/><line x1="468.5" y1="9" x2="468.5" y2="291" stroke="#b4b4b4" stroke-width="1" stroke-dasharray="1 2.2"/><line x1="500.5" y1="9" x2="500.5" y2="291" stroke="#b4b4b4" stroke-width="1" stroke-dasharray="1 2.2"/><line x1="532.5" y1="9" x2="532.5" y2="291" stroke="#b4b4b4" stroke-width="1" stroke-dasharray="1 2.2"/><line x1="0" y1="25.5" x2="549" y2="25.5" stroke="#b4b4b4" stroke-width="1" stroke-dasharray="1 2.2"/><line x1="0" y1="57.5" x2="549" y2="57.5" stroke="#b4b4b4" stroke-width="1" stroke-dasharray="1 2.2"/><line x1="0" y1="90.5" x2="549" y2="90.5" stroke="#b4b4b4" stroke-width="1" stroke-dasharray="1 2.2"/><line x1="0" y1="122.5" x2="549" y2="122.5" stroke="#b4b4b4" stroke-width="1" stroke-dasharray="1 2.2"/><line x1="0" y1="154.5" x2="549" y2="154.5" stroke="#b4b4b4" stroke-width="1" stroke-dasharray="1 2.2"/><line x1="0" y1="187.5" x2="549" y2="187.5" stroke="#b4b4b4" stroke-width="1" stroke-dasharray="1 2.2"/><line x1="0" y1="219.5" x2="549" y2="219.5" stroke="#b4b4b4" stroke-width="1" stroke-dasharray="1 2.2"/><line x1="0" y1="252.5" x2="549" y2="252.5" stroke="#b4b4b4" stroke-width="1" stroke-dasharray="1 2.2"/><line x1="0" y1="284.5" x2="549" y2="284.5" stroke="#b4b4b4" stroke-width="1" stroke-dasharray="1 2.2"/></svg>
<div class="a" style="left:213px;top:144px;width:549px;height:9px;background:#245e9b"></div>
<div class="a" style="left:213px;top:435px;width:549px;height:18px;background:#245e9b"></div>
<svg class="a" style="left:329px;top:331px" width="10" height="13" viewBox="0 0 10 13"><path d="M1 1 L9 1 M5 1 L5 12 M1 12 L9 12" fill="none" stroke="#6a6a6a" stroke-width="1.6"/></svg>
<div class="a" style="left:901px;top:234px;width:3px;height:28px;background:#5a5d60;border-radius:1px"></div>
<div class="a" style="left:912px;top:57px;width:112px;height:64px;overflow:hidden;border-top-left-radius:7px"><svg width="112" height="64" viewBox="0 0 112 64"><defs><filter id="b57" x="-10%" y="-10%" width="120%" height="120%"><feGaussianBlur stdDeviation="0.9"/></filter><filter id="B57" x="-30%" y="-30%" width="160%" height="160%"><feGaussianBlur stdDeviation="4"/></filter></defs><rect width="112" height="64" fill="#8e7662"/>
<g filter="url(#B57)"><rect x="-5" y="-5" width="32" height="75" fill="#9c8670"/><circle cx="12" cy="26" r="7" fill="#c2b2a0"/><circle cx="22" cy="50" r="9" fill="#b8a894"/>
<rect x="30" y="-5" width="60" height="30" fill="#7c6452"/><rect x="90" y="-5" width="30" height="75" fill="#b8aca0"/><circle cx="102" cy="44" r="9" fill="#d8d0c8"/><circle cx="40" cy="10" r="6" fill="#a89480"/></g>
<g filter="url(#b57)"><ellipse cx="58" cy="40" rx="30" ry="17" fill="#3c3838"/>
<path d="M30 66 C33 48 40 40 50 37 L70 37 C82 40 90 48 95 66Z" fill="#1b1c25"/>
<path d="M50 37 L60 52 L71 37Z" fill="#ececec"/><path d="M53 38 L60 48 L68 38Z" fill="#d8b4a2"/><path d="M46 40 L60 56 L75 40 L72 39 L60 52 L49 39Z" fill="#1b1c25"/>
<ellipse cx="59" cy="24" rx="13" ry="15.5" fill="#d6a694"/><ellipse cx="58" cy="12" rx="9" ry="5" fill="#e0b8a8"/>
<path d="M47 25 L71 25" stroke="#7a6262" stroke-width="1.3"/><path d="M53 33 Q59 35 65 33" stroke="#a87868" stroke-width="1"/></g></svg></div>
<div class="a" style="left:912px;top:121px;width:112px;height:64px;overflow:hidden;"><svg width="112" height="64" viewBox="0 0 112 64"><defs><filter id="b121" x="-10%" y="-10%" width="120%" height="120%"><feGaussianBlur stdDeviation="0.9"/></filter><filter id="B121" x="-30%" y="-30%" width="160%" height="160%"><feGaussianBlur stdDeviation="4"/></filter></defs><rect width="112" height="64" fill="#e4e5ea"/>
<g filter="url(#B121)"><rect x="-5" y="-5" width="18" height="75" fill="#86705a"/><rect x="-5" y="-5" width="18" height="10" fill="#5a4c42"/><rect x="98" y="-5" width="20" height="75" fill="#dfe3ea"/></g>
<g filter="url(#b121)"><rect x="105" y="5" width="8" height="38" fill="#b4c8de"/><rect x="100" y="56" width="12" height="8" fill="#505050"/>
<rect x="23" y="8" width="50" height="40" fill="#3c322a"/><rect x="25" y="14" width="10" height="9" fill="#dde6ee"/><rect x="24" y="26" width="6" height="8" fill="#d8c060"/><rect x="30" y="26" width="6" height="8" fill="#8ab890"/><rect x="64" y="16" width="7" height="14" fill="#e6e6e6"/>
<path d="M16 66 C22 52 32 45 44 42 L70 42 C82 45 92 54 97 66Z" fill="#1d2438"/>
<rect x="42" y="38" width="14" height="8" fill="#b48470"/>
<ellipse cx="48.5" cy="19" rx="15.5" ry="12" fill="#363535"/><ellipse cx="48.5" cy="31.5" rx="12" ry="14.5" fill="#c69c86"/>
<path d="M37 27 L60 27" stroke="#28283c" stroke-width="1.8"/><path d="M43 39 Q48.5 41 54 39" stroke="#b06060" stroke-width="1"/></g></svg></div>
<div class="a" style="left:912px;top:186px;width:112px;height:64px;overflow:hidden;"><svg width="112" height="64" viewBox="0 0 112 64"><defs><filter id="b186" x="-10%" y="-10%" width="120%" height="120%"><feGaussianBlur stdDeviation="0.9"/></filter><filter id="B186" x="-30%" y="-30%" width="160%" height="160%"><feGaussianBlur stdDeviation="4"/></filter></defs><rect width="112" height="64" fill="#dcdade"/>
<g filter="url(#B186)"><ellipse cx="35" cy="25" rx="40" ry="30" fill="#eceaee"/><rect x="92" y="-5" width="13" height="75" fill="#c09a6c"/><rect x="105" y="-5" width="12" height="75" fill="#c4c2c0"/><rect x="-5" y="40" width="30" height="30" fill="#c8c6c8"/></g>
<g filter="url(#b186)"><path d="M30 66 C36 52 48 38 64 31 L92 31 C104 36 112 42 116 66Z" fill="#2d2b2b"/>
<ellipse cx="75" cy="22" rx="14" ry="19" fill="#d8c2c4"/><ellipse cx="74" cy="9" rx="10" ry="6" fill="#e6d6d8"/>
<path d="M60 24 L90 24" stroke="#6e6070" stroke-width="1.2"/><path d="M61 40 Q64 50 62 62 M86 40 Q88 50 86 62" stroke="#9a9aa0" stroke-width="0.8" fill="none"/></g></svg></div>
<div class="a" style="left:912px;top:185px;width:112px;height:66px;border:2px solid #2fe08c;border-right:none"></div>
<div class="a" style="left:912px;top:250px;width:112px;height:64px;overflow:hidden;"><svg width="112" height="64" viewBox="0 0 112 64"><defs><filter id="b250" x="-10%" y="-10%" width="120%" height="120%"><feGaussianBlur stdDeviation="0.9"/></filter><filter id="B250" x="-30%" y="-30%" width="160%" height="160%"><feGaussianBlur stdDeviation="4"/></filter></defs><rect width="112" height="64" fill="#d6dae0"/>
<g filter="url(#B250)"><rect x="70" y="-5" width="45" height="50" fill="#e2e4e8"/><rect x="-5" y="40" width="110" height="30" fill="#c2a486"/></g>
<g filter="url(#b250)"><ellipse cx="18" cy="4" rx="9" ry="4" fill="#7a8a70"/><path d="M18 8 L20 18" stroke="#7a8a70" stroke-width="1"/>
<rect x="24" y="19" width="31" height="19" fill="#0c0c0c"/><rect x="38" y="37" width="3" height="5" fill="#222"/><rect x="30" y="41" width="18" height="2" fill="#333"/>
<ellipse cx="9" cy="34" rx="10" ry="7" fill="#5a7a4a"/><rect x="1" y="40" width="8" height="8" fill="#e6e6e6"/><rect x="15" y="42" width="7" height="6" fill="#ececec"/>
<ellipse cx="81" cy="30" rx="7" ry="8" fill="#5a6e4c"/><rect x="78" y="35" width="6" height="6" fill="#d8c0a0"/>
<path d="M100 60 L102 36 Q106 22 112 20 L112 60Z" fill="#5e7a50"/><path d="M96 30 Q104 26 112 30" stroke="#5e7a50" stroke-width="2" fill="none"/>
<rect x="22" y="45" width="22" height="3" fill="#2a2a2a"/><ellipse cx="50" cy="51" rx="5" ry="3" fill="#3a5a88"/>
<path d="M46 66 C48 54 56 47 64 46 C74 47 82 54 86 66Z" fill="#1e1e20"/>
<ellipse cx="64" cy="33" rx="14" ry="15" fill="#2a2626"/><ellipse cx="65" cy="36" rx="10" ry="12" fill="#cca89c"/>
<path d="M57 33 L73 33" stroke="#9a7a78" stroke-width="0.8"/><path d="M62 42 Q65 43 68 42" stroke="#a04848" stroke-width="1"/></g></svg></div>
<div class="a" style="left:912px;top:314px;width:112px;height:64px;overflow:hidden;"><svg width="112" height="64" viewBox="0 0 112 64"><defs><filter id="b314" x="-10%" y="-10%" width="120%" height="120%"><feGaussianBlur stdDeviation="0.9"/></filter><filter id="B314" x="-30%" y="-30%" width="160%" height="160%"><feGaussianBlur stdDeviation="4"/></filter></defs><rect width="112" height="64" fill="#8c847e"/>
<g filter="url(#B314)"><rect x="-5" y="-5" width="24" height="75" fill="#e6e6e8"/><rect x="18" y="5" width="36" height="70" fill="#4c4242"/><rect x="-5" y="-5" width="120" height="14" fill="#c6c2c4"/><rect x="85" y="10" width="30" height="60" fill="#aaa29a"/><circle cx="95" cy="30" r="8" fill="#c8c0b8"/></g>
<g filter="url(#b314)"><path d="M26 66 C30 52 42 44 56 42 L70 42 C86 44 96 52 102 66Z" fill="#89837f"/>
<path d="M52 42 L62 64 L72 42Z" fill="#2c2828"/>
<ellipse cx="62" cy="31" rx="13" ry="16" fill="#c8a8a0"/><ellipse cx="62" cy="17" rx="14" ry="8" fill="#e6e4e2"/><ellipse cx="50" cy="24" rx="3" ry="7" fill="#e0dede"/><ellipse cx="74" cy="24" rx="3" ry="7" fill="#e0dede"/>
<path d="M49 28 L75 28" stroke="#6c5878" stroke-width="1.2"/><path d="M56 40 Q62 38 68 40" stroke="#8a6a60" stroke-width="1.2"/></g></svg></div>
<div class="a" style="left:912px;top:378px;width:112px;height:64px;overflow:hidden;border-bottom-left-radius:7px"><svg width="112" height="64" viewBox="0 0 112 64"><defs><filter id="b378" x="-10%" y="-10%" width="120%" height="120%"><feGaussianBlur stdDeviation="0.9"/></filter><filter id="B378" x="-30%" y="-30%" width="160%" height="160%"><feGaussianBlur stdDeviation="4"/></filter></defs><rect width="112" height="64" fill="#dcdee2"/>
<g filter="url(#B378)"><rect x="-5" y="-5" width="120" height="20" fill="#e2e4e8"/><rect x="-5" y="10" width="52" height="60" fill="#c0c4c8"/><rect x="75" y="15" width="40" height="40" fill="#e8eaee"/></g>
<g filter="url(#b378)"><rect x="50" y="5" width="22" height="6" fill="#f6f8fa"/><rect x="88" y="11" width="16" height="4" fill="#f2f4f6"/>
<path d="M8 8 L8 64 M22 10 L22 64" stroke="#a8acb0" stroke-width="1"/>
<rect x="77" y="25" width="19" height="11" fill="#18181e"/>
<path d="M68 44 L100 40 L112 44 L112 66 L70 66Z" fill="#d8dadc"/><path d="M86 46 L112 52 L112 66 L82 66Z" fill="#2c2c34"/><rect x="64" y="44" width="6" height="10" fill="#3a3a40"/>
<path d="M36 66 C42 56 50 52 58 51 C70 52 80 56 86 66Z" fill="#e6ecf2"/>
<ellipse cx="56" cy="24" rx="13" ry="11" fill="#1e1c1e"/><ellipse cx="56" cy="35" rx="11" ry="15" fill="#d2b2a2"/>
<path d="M45 33 L67 33" stroke="#3c3c44" stroke-width="1.3"/><path d="M52 45 Q56 46 60 45" stroke="#a87070" stroke-width="1"/></g></svg></div>
<div class="a" style="left:915px;top:106.5px;width:37.5px;height:11.5px;background:rgba(38,38,40,.72);border-radius:4px"></div>
<div class="a" style="left:914.7px;top:170.2px;width:53.89999999999998px;height:13.200000000000017px;background:rgba(38,38,40,.72);border-radius:4px"></div>
<svg class="a" style="left:916.7px;top:171.8px" width="10" height="10" viewBox="0 0 10 10"><rect x="3.5" y="1" width="3.5" height="5" rx="1.7" fill="#e0483a"/><path d="M2.5 4.5 Q2.5 7.5 5.2 7.5 Q8 7.5 8 4.5 M5.2 7.5 L5.2 9 M3.5 9.2 L7 9.2" fill="none" stroke="#e0483a" stroke-width="0.9"/><line x1="9" y1="1" x2="1" y2="9.5" stroke="#e0483a" stroke-width="1"/></svg>
<div class="a" style="left:914.7px;top:234px;width:40.59999999999991px;height:14px;background:rgba(38,38,40,.72);border-radius:4px"></div>
<div class="a" style="left:914.7px;top:299px;width:46.799999999999955px;height:14.399999999999977px;background:rgba(38,38,40,.72);border-radius:4px"></div>
<div class="a" style="left:914.7px;top:362.5px;width:53.299999999999955px;height:14.899999999999977px;background:rgba(38,38,40,.72);border-radius:4px"></div>
<svg class="a" style="left:916.7px;top:364.95px" width="10" height="10" viewBox="0 0 10 10"><rect x="3.5" y="1" width="3.5" height="5" rx="1.7" fill="#e0483a"/><path d="M2.5 4.5 Q2.5 7.5 5.2 7.5 Q8 7.5 8 4.5 M5.2 7.5 L5.2 9 M3.5 9.2 L7 9.2" fill="none" stroke="#e0483a" stroke-width="0.9"/><line x1="9" y1="1" x2="1" y2="9.5" stroke="#e0483a" stroke-width="1"/></svg>
<div class="a" style="left:914.7px;top:427.3px;width:47.09999999999991px;height:13.0px;background:rgba(38,38,40,.72);border-radius:4px"></div>
<svg class="a" style="left:916.7px;top:428.8px" width="10" height="10" viewBox="0 0 10 10"><rect x="3.5" y="1" width="3.5" height="5" rx="1.7" fill="#e0483a"/><path d="M2.5 4.5 Q2.5 7.5 5.2 7.5 Q8 7.5 8 4.5 M5.2 7.5 L5.2 9 M3.5 9.2 L7 9.2" fill="none" stroke="#e0483a" stroke-width="0.9"/><line x1="9" y1="1" x2="1" y2="9.5" stroke="#e0483a" stroke-width="1"/></svg>
<div class="a" style="left:943px;top:442px;width:51px;height:23px;background:#0d0e10;border-radius:0 0 3px 3px"></div>
<svg class="a" style="left:963px;top:450px" width="12" height="7" viewBox="0 0 12 7"><path d="M1 1 L6 5.8 L11 1" fill="none" stroke="#c8c8c8" stroke-width="1.2"/></svg>
<div class="t" style="left:33.01px;top:13.30px;font-family:'Liberation Sans',sans-serif;font-size:9px;font-weight:normal;color:#3a3a3a;letter-spacing:0px;transform:scaleX(0.985);transform-origin:0 0;">自動保存</div>
<div class="t" style="left:87.46px;top:13.30px;font-family:'Liberation Sans',sans-serif;font-size:8px;font-weight:normal;color:#333;letter-spacing:0px;transform:scaleX(0.936);transform-origin:0 0;">オフ</div>
<div class="t" style="left:213.00px;top:13.10px;font-family:'Liberation Sans',sans-serif;font-size:9px;font-weight:normal;color:#333;letter-spacing:0px;transform:scaleX(0.892);transform-origin:0 0;">中期経営計画を作る</div>
<div class="t" style="left:279.15px;top:13.60px;font-family:'Liberation Sans',sans-serif;font-size:9px;font-weight:normal;color:#333;letter-spacing:0px;transform:scaleX(1.308);transform-origin:0 0;">（最終）</div>
<div class="t" style="left:340.76px;top:13.30px;font-family:'Liberation Sans',sans-serif;font-size:9px;font-weight:normal;color:#333;letter-spacing:0px;transform:scaleX(0.735);transform-origin:0 0;">この</div>
<div class="t" style="left:356.03px;top:12.80px;font-family:'Liberation Sans',sans-serif;font-size:9.5px;font-weight:normal;color:#333;letter-spacing:0px;transform:scaleX(0.967);transform-origin:0 0;">PC</div>
<div class="t" style="left:370.55px;top:13.80px;font-family:'Liberation Sans',sans-serif;font-size:9px;font-weight:normal;color:#333;letter-spacing:0px;transform:scaleX(0.953);transform-origin:0 0;">に保存済み</div>
<div class="t" style="left:473.30px;top:12.70px;font-family:'Liberation Sans',sans-serif;font-size:9.5px;font-weight:normal;color:#555;letter-spacing:0px;transform:scaleX(0.970);transform-origin:0 0;">検索</div>
<div class="t" style="left:7.11px;top:41.20px;font-family:'Liberation Sans',sans-serif;font-size:9.5px;font-weight:normal;color:#2e2e2e;letter-spacing:0px;transform:scaleX(0.695);transform-origin:0 0;">ファイル</div>
<div class="t" style="left:45.90px;top:41.20px;font-family:'Liberation Sans',sans-serif;font-size:9.5px;font-weight:bold;color:#1e1e1e;letter-spacing:0px;transform:scaleX(0.828);transform-origin:0 0;">ホーム</div>
<div class="t" style="left:81.00px;top:41.70px;font-family:'Liberation Sans',sans-serif;font-size:9.5px;font-weight:normal;color:#2e2e2e;letter-spacing:0px;transform:scaleX(0.926);transform-origin:0 0;">挿入</div>
<div class="t" style="left:111.00px;top:41.70px;font-family:'Liberation Sans',sans-serif;font-size:9.5px;font-weight:normal;color:#2e2e2e;letter-spacing:0px;transform:scaleX(0.947);transform-origin:0 0;">描画</div>
<div class="t" style="left:139.42px;top:41.70px;font-family:'Liberation Sans',sans-serif;font-size:9.5px;font-weight:normal;color:#2e2e2e;letter-spacing:0px;transform:scaleX(0.792);transform-origin:0 0;">デザイン</div>
<div class="t" style="left:182.11px;top:41.20px;font-family:'Liberation Sans',sans-serif;font-size:9.5px;font-weight:normal;color:#2e2e2e;letter-spacing:0px;transform:scaleX(0.891);transform-origin:0 0;">画面切り替え</div>
<div class="t" style="left:247.69px;top:41.20px;font-family:'Liberation Sans',sans-serif;font-size:9.5px;font-weight:normal;color:#2e2e2e;letter-spacing:0px;transform:scaleX(0.712);transform-origin:0 0;">アニメーション</div>
<div class="t" style="left:310.58px;top:41.20px;font-family:'Liberation Sans',sans-serif;font-size:9.5px;font-weight:normal;color:#2e2e2e;letter-spacing:0px;transform:scaleX(0.723);transform-origin:0 0;">スライド ショー</div>
<div class="t" style="left:376.80px;top:41.70px;font-family:'Liberation Sans',sans-serif;font-size:9.5px;font-weight:normal;color:#2e2e2e;letter-spacing:0px;transform:scaleX(0.958);transform-origin:0 0;">記録</div>
<div class="t" style="left:406.00px;top:41.70px;font-family:'Liberation Sans',sans-serif;font-size:9.5px;font-weight:normal;color:#2e2e2e;letter-spacing:0px;transform:scaleX(0.915);transform-origin:0 0;">校閲</div>
<div class="t" style="left:435.03px;top:41.70px;font-family:'Liberation Sans',sans-serif;font-size:9.5px;font-weight:normal;color:#2e2e2e;letter-spacing:0px;transform:scaleX(0.968);transform-origin:0 0;">表示</div>
<div class="t" style="left:465.30px;top:41.20px;font-family:'Liberation Sans',sans-serif;font-size:9.5px;font-weight:normal;color:#2e2e2e;letter-spacing:0px;transform:scaleX(0.810);transform-origin:0 0;">ヘルプ</div>
<div class="t" style="left:501.80px;top:41.70px;font-family:'Liberation Sans',sans-serif;font-size:9.5px;font-weight:normal;color:#2e2e2e;letter-spacing:0px;transform:scaleX(1.085);transform-origin:0 0;">Acrobat</div>
<div class="t" style="left:738.80px;top:42.00px;font-family:'Liberation Sans',sans-serif;font-size:9.5px;font-weight:normal;color:#333;letter-spacing:0px;transform:scaleX(0.979);transform-origin:0 0;">記録</div>
<div class="t" style="left:801.00px;top:42.00px;font-family:'Liberation Sans',sans-serif;font-size:9.5px;font-weight:normal;color:#fff;letter-spacing:0px;">共有</div>
<div class="t" style="left:11.70px;top:86.00px;font-family:'Liberation Sans',sans-serif;font-size:9px;font-weight:normal;color:#b8b8b8;letter-spacing:0px;transform:scaleX(0.857);transform-origin:0 0;">貼り付け</div>
<div class="t" style="left:13.27px;top:111.00px;font-family:'Liberation Sans',sans-serif;font-size:9px;font-weight:normal;color:#3a3a3a;letter-spacing:0px;transform:scaleX(0.730);transform-origin:0 0;">クリップボード</div>
<div class="t" style="left:89.92px;top:86.00px;font-family:'Liberation Sans',sans-serif;font-size:9px;font-weight:normal;color:#333;letter-spacing:0px;transform:scaleX(0.876);transform-origin:0 0;">新しい</div>
<div class="t" style="left:82.50px;top:97.50px;font-family:'Liberation Sans',sans-serif;font-size:9px;font-weight:normal;color:#333;letter-spacing:0px;transform:scaleX(0.750);transform-origin:0 0;">スライド</div>
<div class="t" style="left:99.40px;top:110.50px;font-family:'Liberation Sans',sans-serif;font-size:9px;font-weight:normal;color:#3a3a3a;letter-spacing:0px;transform:scaleX(0.800);transform-origin:0 0;">スライド</div>
<div class="t" style="left:258.22px;top:65.60px;font-family:'Liberation Sans',sans-serif;font-size:9.5px;font-weight:normal;color:#bdbdbd;letter-spacing:0px;transform:scaleX(1.078);transform-origin:0 0;">18</div>
<div class="t" style="left:297.00px;top:67.00px;font-family:'Liberation Sans',sans-serif;font-size:10px;font-weight:normal;color:#b5b5b5;letter-spacing:0px;">A</div>
<div class="t" style="left:314.00px;top:67.50px;font-family:'Liberation Sans',sans-serif;font-size:9px;font-weight:normal;color:#b5b5b5;letter-spacing:0px;">A</div>
<div class="t" style="left:330.50px;top:66.00px;font-family:'Liberation Sans',sans-serif;font-size:10px;font-weight:normal;color:#b5b5b5;letter-spacing:0px;transform:scaleX(1.071);transform-origin:0 0;">A</div>
<div class="t" style="left:158.45px;top:86.00px;font-family:'Liberation Sans',sans-serif;font-size:10.5px;font-weight:bold;color:#aaa;letter-spacing:0px;transform:scaleX(1.150);transform-origin:0 0;">B</div>
<div class="t" style="left:175.40px;top:86.00px;font-family:'Liberation Sans',sans-serif;font-size:10.5px;font-weight:normal;color:#aaa;letter-spacing:0px;transform:scaleX(1.600);transform-origin:0 0;font-style:italic;">I</div>
<div class="t" style="left:190.67px;top:86.00px;font-family:'Liberation Sans',sans-serif;font-size:10.5px;font-weight:normal;color:#aaa;letter-spacing:0px;transform:scaleX(1.333);transform-origin:0 0;text-decoration:underline;">U</div>
<div class="t" style="left:209.00px;top:86.00px;font-family:'Liberation Sans',sans-serif;font-size:10.5px;font-weight:bold;color:#aaa;letter-spacing:0px;transform:scaleX(0.929);transform-origin:0 0;">S</div>
<div class="t" style="left:223.00px;top:86.50px;font-family:'Liberation Sans',sans-serif;font-size:9.5px;font-weight:normal;color:#b5b5b5;letter-spacing:0px;transform:scaleX(1.100);transform-origin:0 0;">ab</div>
<div class="t" style="left:240.70px;top:85.00px;font-family:'Liberation Sans',sans-serif;font-size:8px;font-weight:normal;color:#b5b5b5;letter-spacing:0px;transform:scaleX(1.030);transform-origin:0 0;">AV</div>
<div class="t" style="left:267.00px;top:86.00px;font-family:'Liberation Sans',sans-serif;font-size:9.5px;font-weight:normal;color:#b5b5b5;letter-spacing:0px;transform:scaleX(1.273);transform-origin:0 0;">Aa</div>
<div class="t" style="left:321.00px;top:84.00px;font-family:'Liberation Sans',sans-serif;font-size:11px;font-weight:normal;color:#b5b5b5;letter-spacing:0px;transform:scaleX(1.429);transform-origin:0 0;">A</div>
<div class="t" style="left:230.27px;top:111.00px;font-family:'Liberation Sans',sans-serif;font-size:9px;font-weight:normal;color:#3a3a3a;letter-spacing:0px;transform:scaleX(0.727);transform-origin:0 0;">フォント</div>
<div class="t" style="left:400.00px;top:111.00px;font-family:'Liberation Sans',sans-serif;font-size:9px;font-weight:normal;color:#3a3a3a;letter-spacing:0px;transform:scaleX(0.941);transform-origin:0 0;">段落</div>
<div class="t" style="left:487.47px;top:86.40px;font-family:'Liberation Sans',sans-serif;font-size:9px;font-weight:normal;color:#333;letter-spacing:0px;transform:scaleX(1.029);transform-origin:0 0;">図形</div>
<div class="t" style="left:516.94px;top:86.40px;font-family:'Liberation Sans',sans-serif;font-size:9px;font-weight:normal;color:#333;letter-spacing:0px;transform:scaleX(1.062);transform-origin:0 0;">配置</div>
<div class="t" style="left:547.89px;top:85.50px;font-family:'Liberation Sans',sans-serif;font-size:9px;font-weight:normal;color:#bdbdbd;letter-spacing:0px;transform:scaleX(0.709);transform-origin:0 0;">クイック</div>
<div class="t" style="left:542.15px;top:97.50px;font-family:'Liberation Sans',sans-serif;font-size:9px;font-weight:normal;color:#bdbdbd;letter-spacing:0px;transform:scaleX(0.774);transform-origin:0 0;">スタイル</div>
<div class="t" style="left:522.90px;top:111.00px;font-family:'Liberation Sans',sans-serif;font-size:9px;font-weight:normal;color:#3a3a3a;letter-spacing:0px;">図形描画</div>
<div class="t" style="left:624.00px;top:85.40px;font-family:'Liberation Sans',sans-serif;font-size:9px;font-weight:normal;color:#333;letter-spacing:0px;transform:scaleX(1.029);transform-origin:0 0;">編集</div>
<div class="t" style="left:674.71px;top:86.30px;font-family:'Liberation Sans',sans-serif;font-size:9px;font-weight:normal;color:#333;letter-spacing:0px;transform:scaleX(0.988);transform-origin:0 0;">PDF</div>
<div class="t" style="left:671.08px;top:97.20px;font-family:'Liberation Sans',sans-serif;font-size:9px;font-weight:normal;color:#333;letter-spacing:0px;transform:scaleX(0.923);transform-origin:0 0;">を作成</div>
<div class="t" style="left:652.00px;top:110.50px;font-family:'Liberation Sans',sans-serif;font-size:9.5px;font-weight:normal;color:#3a3a3a;letter-spacing:0px;transform:scaleX(1.016);transform-origin:0 0;">Adobe Acrobat</div>
<div class="t" style="left:728.67px;top:85.50px;font-family:'Liberation Sans',sans-serif;font-size:9px;font-weight:normal;color:#333;letter-spacing:0px;transform:scaleX(0.927);transform-origin:0 0;">アド</div>
<div class="t" style="left:731.31px;top:97.50px;font-family:'Liberation Sans',sans-serif;font-size:9px;font-weight:normal;color:#333;letter-spacing:0px;transform:scaleX(0.688);transform-origin:0 0;">イン</div>
<div class="t" style="left:722.75px;top:110.50px;font-family:'Liberation Sans',sans-serif;font-size:9px;font-weight:normal;color:#3a3a3a;letter-spacing:0px;transform:scaleX(0.750);transform-origin:0 0;">アドイン</div>
<div class="t" style="left:766.00px;top:85.50px;font-family:'Liberation Sans',sans-serif;font-size:9.5px;font-weight:normal;color:#333;letter-spacing:0px;transform:scaleX(0.949);transform-origin:0 0;">ChatGPT</div>
<div class="t" style="left:760.01px;top:97.50px;font-family:'Liberation Sans',sans-serif;font-size:9.5px;font-weight:normal;color:#333;letter-spacing:0px;">PowerPoint</div>
<div class="t" style="left:780.00px;top:110.00px;font-family:'Liberation Sans',sans-serif;font-size:9.5px;font-weight:normal;color:#333;letter-spacing:0px;transform:scaleX(1.125);transform-origin:0 0;">AI</div>
<div class="t" style="left:8.38px;top:132.70px;font-family:'Liberation Sans',sans-serif;font-size:10px;font-weight:normal;color:#c7482a;letter-spacing:0px;transform:scaleX(1.125);transform-origin:0 0;">1</div>
<div class="t" style="left:9.00px;top:190.00px;font-family:'Liberation Sans',sans-serif;font-size:10px;font-weight:normal;color:#555;letter-spacing:0px;">2</div>
<div class="t" style="left:9.00px;top:247.50px;font-family:'Liberation Sans',sans-serif;font-size:10px;font-weight:normal;color:#555;letter-spacing:0px;">3</div>
<div class="t" style="left:222.07px;top:124.13px;font-family:'Liberation Sans',sans-serif;font-size:9.5px;font-weight:normal;color:#505050;letter-spacing:0px;transform:scale(1.133,1.133);transform-origin:0 0;">16</div>
<div class="t" style="left:238.27px;top:124.13px;font-family:'Liberation Sans',sans-serif;font-size:9.5px;font-weight:normal;color:#505050;letter-spacing:0px;transform:scale(1.133,1.133);transform-origin:0 0;">15</div>
<div class="t" style="left:254.47px;top:124.13px;font-family:'Liberation Sans',sans-serif;font-size:9.5px;font-weight:normal;color:#505050;letter-spacing:0px;transform:scale(1.133,1.133);transform-origin:0 0;">14</div>
<div class="t" style="left:270.67px;top:124.13px;font-family:'Liberation Sans',sans-serif;font-size:9.5px;font-weight:normal;color:#505050;letter-spacing:0px;transform:scale(1.133,1.133);transform-origin:0 0;">13</div>
<div class="t" style="left:286.87px;top:124.13px;font-family:'Liberation Sans',sans-serif;font-size:9.5px;font-weight:normal;color:#505050;letter-spacing:0px;transform:scale(1.133,1.133);transform-origin:0 0;">12</div>
<div class="t" style="left:302.92px;top:124.13px;font-family:'Liberation Sans',sans-serif;font-size:9.5px;font-weight:normal;color:#505050;letter-spacing:0px;transform:scale(1.275,1.133);transform-origin:0 0;">11</div>
<div class="t" style="left:319.27px;top:124.13px;font-family:'Liberation Sans',sans-serif;font-size:9.5px;font-weight:normal;color:#505050;letter-spacing:0px;transform:scale(1.133,1.133);transform-origin:0 0;">10</div>
<div class="t" style="left:339.00px;top:124.13px;font-family:'Liberation Sans',sans-serif;font-size:9.5px;font-weight:normal;color:#505050;letter-spacing:0px;transform:scale(1.080,1.133);transform-origin:0 0;">9</div>
<div class="t" style="left:355.20px;top:124.13px;font-family:'Liberation Sans',sans-serif;font-size:9.5px;font-weight:normal;color:#505050;letter-spacing:0px;transform:scale(1.080,1.133);transform-origin:0 0;">8</div>
<div class="t" style="left:370.05px;top:124.13px;font-family:'Liberation Sans',sans-serif;font-size:9.5px;font-weight:normal;color:#505050;letter-spacing:0px;transform:scale(1.350,1.133);transform-origin:0 0;">7</div>
<div class="t" style="left:387.60px;top:124.13px;font-family:'Liberation Sans',sans-serif;font-size:9.5px;font-weight:normal;color:#505050;letter-spacing:0px;transform:scale(1.080,1.133);transform-origin:0 0;">6</div>
<div class="t" style="left:402.45px;top:124.13px;font-family:'Liberation Sans',sans-serif;font-size:9.5px;font-weight:normal;color:#505050;letter-spacing:0px;transform:scale(1.350,1.133);transform-origin:0 0;">5</div>
<div class="t" style="left:420.00px;top:124.13px;font-family:'Liberation Sans',sans-serif;font-size:9.5px;font-weight:normal;color:#505050;letter-spacing:0px;transform:scale(1.080,1.133);transform-origin:0 0;">4</div>
<div class="t" style="left:436.20px;top:124.13px;font-family:'Liberation Sans',sans-serif;font-size:9.5px;font-weight:normal;color:#505050;letter-spacing:0px;transform:scale(1.080,1.133);transform-origin:0 0;">3</div>
<div class="t" style="left:452.40px;top:124.13px;font-family:'Liberation Sans',sans-serif;font-size:9.5px;font-weight:normal;color:#505050;letter-spacing:0px;transform:scale(1.080,1.133);transform-origin:0 0;">2</div>
<div class="t" style="left:467.25px;top:124.13px;font-family:'Liberation Sans',sans-serif;font-size:9.5px;font-weight:normal;color:#505050;letter-spacing:0px;transform:scale(1.350,1.133);transform-origin:0 0;">1</div>
<div class="t" style="left:484.80px;top:124.13px;font-family:'Liberation Sans',sans-serif;font-size:9.5px;font-weight:normal;color:#505050;letter-spacing:0px;transform:scale(1.080,1.133);transform-origin:0 0;">0</div>
<div class="t" style="left:499.65px;top:124.13px;font-family:'Liberation Sans',sans-serif;font-size:9.5px;font-weight:normal;color:#505050;letter-spacing:0px;transform:scale(1.350,1.133);transform-origin:0 0;">1</div>
<div class="t" style="left:517.20px;top:124.13px;font-family:'Liberation Sans',sans-serif;font-size:9.5px;font-weight:normal;color:#505050;letter-spacing:0px;transform:scale(1.080,1.133);transform-origin:0 0;">2</div>
<div class="t" style="left:533.40px;top:124.13px;font-family:'Liberation Sans',sans-serif;font-size:9.5px;font-weight:normal;color:#505050;letter-spacing:0px;transform:scale(1.080,1.133);transform-origin:0 0;">3</div>
<div class="t" style="left:549.60px;top:124.13px;font-family:'Liberation Sans',sans-serif;font-size:9.5px;font-weight:normal;color:#505050;letter-spacing:0px;transform:scale(1.080,1.133);transform-origin:0 0;">4</div>
<div class="t" style="left:564.45px;top:124.13px;font-family:'Liberation Sans',sans-serif;font-size:9.5px;font-weight:normal;color:#505050;letter-spacing:0px;transform:scale(1.350,1.133);transform-origin:0 0;">5</div>
<div class="t" style="left:582.00px;top:124.13px;font-family:'Liberation Sans',sans-serif;font-size:9.5px;font-weight:normal;color:#505050;letter-spacing:0px;transform:scale(1.080,1.133);transform-origin:0 0;">6</div>
<div class="t" style="left:596.85px;top:124.13px;font-family:'Liberation Sans',sans-serif;font-size:9.5px;font-weight:normal;color:#505050;letter-spacing:0px;transform:scale(1.350,1.133);transform-origin:0 0;">7</div>
<div class="t" style="left:614.40px;top:124.13px;font-family:'Liberation Sans',sans-serif;font-size:9.5px;font-weight:normal;color:#505050;letter-spacing:0px;transform:scale(1.080,1.133);transform-origin:0 0;">8</div>
<div class="t" style="left:630.60px;top:124.13px;font-family:'Liberation Sans',sans-serif;font-size:9.5px;font-weight:normal;color:#505050;letter-spacing:0px;transform:scale(1.080,1.133);transform-origin:0 0;">9</div>
<div class="t" style="left:643.27px;top:124.13px;font-family:'Liberation Sans',sans-serif;font-size:9.5px;font-weight:normal;color:#505050;letter-spacing:0px;transform:scale(1.133,1.133);transform-origin:0 0;">10</div>
<div class="t" style="left:659.33px;top:124.13px;font-family:'Liberation Sans',sans-serif;font-size:9.5px;font-weight:normal;color:#505050;letter-spacing:0px;transform:scale(1.275,1.133);transform-origin:0 0;">11</div>
<div class="t" style="left:675.67px;top:124.13px;font-family:'Liberation Sans',sans-serif;font-size:9.5px;font-weight:normal;color:#505050;letter-spacing:0px;transform:scale(1.133,1.133);transform-origin:0 0;">12</div>
<div class="t" style="left:691.87px;top:124.13px;font-family:'Liberation Sans',sans-serif;font-size:9.5px;font-weight:normal;color:#505050;letter-spacing:0px;transform:scale(1.133,1.133);transform-origin:0 0;">13</div>
<div class="t" style="left:708.07px;top:124.13px;font-family:'Liberation Sans',sans-serif;font-size:9.5px;font-weight:normal;color:#505050;letter-spacing:0px;transform:scale(1.133,1.133);transform-origin:0 0;">14</div>
<div class="t" style="left:724.27px;top:124.13px;font-family:'Liberation Sans',sans-serif;font-size:9.5px;font-weight:normal;color:#505050;letter-spacing:0px;transform:scale(1.133,1.133);transform-origin:0 0;">15</div>
<div class="t" style="left:740.47px;top:124.13px;font-family:'Liberation Sans',sans-serif;font-size:9.5px;font-weight:normal;color:#505050;letter-spacing:0px;transform:scale(1.133,1.133);transform-origin:0 0;">16</div>
<div class="t" style="left:132.46px;top:468.40px;font-family:'Liberation Sans',sans-serif;font-size:9.5px;font-weight:normal;color:#666;letter-spacing:0px;transform:scaleX(0.843);transform-origin:0 0;">ノートを入力</div>
<div class="t" style="left:5.33px;top:486.80px;font-family:'Liberation Sans',sans-serif;font-size:9.5px;font-weight:normal;color:#555;letter-spacing:0px;transform:scaleX(0.671);transform-origin:0 0;">スライド</div>
<div class="t" style="left:34.00px;top:488.00px;font-family:'Liberation Sans',sans-serif;font-size:10px;font-weight:normal;color:#555;letter-spacing:0px;">1/38</div>
<div class="t" style="left:83.65px;top:487.30px;font-family:'Liberation Sans',sans-serif;font-size:10px;font-weight:normal;color:#555;letter-spacing:0px;transform:scaleX(0.926);transform-origin:0 0;">日本語</div>
<div class="t" style="left:131.54px;top:487.60px;font-family:'Liberation Sans',sans-serif;font-size:9px;font-weight:bold;color:#222;letter-spacing:0px;transform:scaleX(0.862);transform-origin:0 0;">アクセシビリティ: 検討が必要です</div>
<div class="t" style="left:568.15px;top:487.40px;font-family:'Liberation Sans',sans-serif;font-size:9px;font-weight:normal;color:#555;letter-spacing:0px;transform:scaleX(0.826);transform-origin:0 0;">ノート</div>
<div class="t" style="left:796.76px;top:486.80px;font-family:'Liberation Sans',sans-serif;font-size:9.5px;font-weight:normal;color:#555;letter-spacing:0px;transform:scaleX(1.044);transform-origin:0 0;">79%</div>
<div class="t" style="left:247.00px;top:162.80px;font-family:'Liberation Sans',sans-serif;font-size:16px;font-weight:bold;color:#141414;letter-spacing:0px;transform:scaleX(0.963);transform-origin:0 0;-webkit-text-stroke:0.2px #141414;">第128回経営オープンセミナー（TAMA活性化支援グループ）</div>
<div class="t" style="left:336.61px;top:264.75px;font-family:'Liberation Serif',serif;font-size:38px;font-weight:bold;color:#000;letter-spacing:0px;transform:scale(0.888,0.756);transform-origin:0 0;-webkit-text-stroke:1.3px #000;">中期経営計画を作る</div>
<div class="t" style="left:379.00px;top:331.80px;font-family:'Liberation Sans',sans-serif;font-size:11.5px;font-weight:bold;color:#151515;letter-spacing:0px;transform:scaleX(0.952);transform-origin:0 0;-webkit-text-stroke:0.3px #151515;">製造業を対象にした中期経営計画策定事例</div>
<div class="t" style="left:326.89px;top:344.60px;font-family:'Liberation Sans',sans-serif;font-size:11.5px;font-weight:bold;color:#151515;letter-spacing:0px;transform:scaleX(0.955);transform-origin:0 0;-webkit-text-stroke:0.3px #151515;">～ローカルベンチマークツールの活用と非対話型アプローチ～</div>
<div class="t" style="left:431.00px;top:396.00px;font-family:'Liberation Sans',sans-serif;font-size:15.5px;font-weight:bold;color:#111;letter-spacing:0px;transform:scaleX(0.987);transform-origin:0 0;-webkit-text-stroke:0.3px #111;">令和8年2月17日（火）</div>
<div class="t" style="left:416.00px;top:414.90px;font-family:'Liberation Sans',sans-serif;font-size:15.5px;font-weight:bold;color:#111;letter-spacing:0px;transform:scaleX(0.984);transform-origin:0 0;-webkit-text-stroke:0.3px #111;">中小企業診断士　阿部令一</div>
<div class="t" style="left:444.17px;top:441.70px;font-family:'Liberation Sans',sans-serif;font-size:9px;font-weight:normal;color:#dfe6ef;letter-spacing:0px;transform:scaleX(1.035);transform-origin:0 0;">©2026 ABE REIICHI</div>
<div class="t" style="left:743.12px;top:441.20px;font-family:'Liberation Sans',sans-serif;font-size:9px;font-weight:normal;color:#dfe6ef;letter-spacing:0px;transform:scaleX(0.875);transform-origin:0 0;">1</div>
<div class="t" style="left:916.12px;top:108.30px;font-family:'Liberation Sans',sans-serif;font-size:9.5px;font-weight:normal;color:#f2f2f2;letter-spacing:0px;transform:scaleX(0.879);transform-origin:0 0;">下垣　豊</div>
<div class="t" style="left:929.05px;top:172.70px;font-family:'Liberation Sans',sans-serif;font-size:9.5px;font-weight:normal;color:#f2f2f2;letter-spacing:0px;transform:scaleX(0.953);transform-origin:0 0;">酒井雅史</div>
<div class="t" style="left:916.05px;top:236.50px;font-family:'Liberation Sans',sans-serif;font-size:9.5px;font-weight:normal;color:#f2f2f2;letter-spacing:0px;transform:scaleX(0.947);transform-origin:0 0;">阿部令一</div>
<div class="t" style="left:917.00px;top:301.10px;font-family:'Liberation Sans',sans-serif;font-size:9.5px;font-weight:normal;color:#f2f2f2;letter-spacing:0px;transform:scaleX(0.852);transform-origin:0 0;">中野　直哉</div>
<div class="t" style="left:930.00px;top:365.10px;font-family:'Liberation Sans',sans-serif;font-size:9.5px;font-weight:normal;color:#f2f2f2;letter-spacing:0px;transform:scaleX(0.921);transform-origin:0 0;">細谷和丈</div>
<div class="t" style="left:929.04px;top:429.50px;font-family:'Liberation Sans',sans-serif;font-size:9.5px;font-weight:normal;color:#f2f2f2;letter-spacing:0px;transform:scaleX(0.958);transform-origin:0 0;">古屋 健</div>
<div class="a" style="left:24px;top:133px;width:549px;height:309px;transform:scale(0.14572);transform-origin:0 0;background:#fff;overflow:hidden"><div class="a" style="left:0;top:0;width:549px;height:9px;background:#245e9b"></div><div class="a" style="left:0;top:291px;width:549px;height:18px;background:#245e9b"></div><div class="t" style="left:34.00px;top:18.80px;font-family:'Liberation Sans',sans-serif;font-size:16px;font-weight:bold;color:#141414;letter-spacing:0px;transform:scaleX(0.963);transform-origin:0 0;-webkit-text-stroke:0.2px #141414;">第128回経営オープンセミナー（TAMA活性化支援グループ）</div>
<div class="t" style="left:123.61px;top:120.75px;font-family:'Liberation Serif',serif;font-size:38px;font-weight:bold;color:#000;letter-spacing:0px;transform:scale(0.888,0.756);transform-origin:0 0;-webkit-text-stroke:1.3px #000;">中期経営計画を作る</div>
<div class="t" style="left:166.00px;top:187.80px;font-family:'Liberation Sans',sans-serif;font-size:11.5px;font-weight:bold;color:#151515;letter-spacing:0px;transform:scaleX(0.952);transform-origin:0 0;-webkit-text-stroke:0.3px #151515;">製造業を対象にした中期経営計画策定事例</div>
<div class="t" style="left:113.89px;top:200.60px;font-family:'Liberation Sans',sans-serif;font-size:11.5px;font-weight:bold;color:#151515;letter-spacing:0px;transform:scaleX(0.955);transform-origin:0 0;-webkit-text-stroke:0.3px #151515;">～ローカルベンチマークツールの活用と非対話型アプローチ～</div>
<div class="t" style="left:218.00px;top:252.00px;font-family:'Liberation Sans',sans-serif;font-size:15.5px;font-weight:bold;color:#111;letter-spacing:0px;transform:scaleX(0.987);transform-origin:0 0;-webkit-text-stroke:0.3px #111;">令和8年2月17日（火）</div>
<div class="t" style="left:203.00px;top:270.90px;font-family:'Liberation Sans',sans-serif;font-size:15.5px;font-weight:bold;color:#111;letter-spacing:0px;transform:scaleX(0.984);transform-origin:0 0;-webkit-text-stroke:0.3px #111;">中小企業診断士　阿部令一</div>
<div class="t" style="left:231.17px;top:297.70px;font-family:'Liberation Sans',sans-serif;font-size:9px;font-weight:normal;color:#dfe6ef;letter-spacing:0px;transform:scaleX(1.035);transform-origin:0 0;">©2026 ABE REIICHI</div>
<div class="t" style="left:530.12px;top:297.20px;font-family:'Liberation Sans',sans-serif;font-size:9px;font-weight:normal;color:#dfe6ef;letter-spacing:0px;transform:scaleX(0.875);transform-origin:0 0;">1</div></div>
</body></html>
